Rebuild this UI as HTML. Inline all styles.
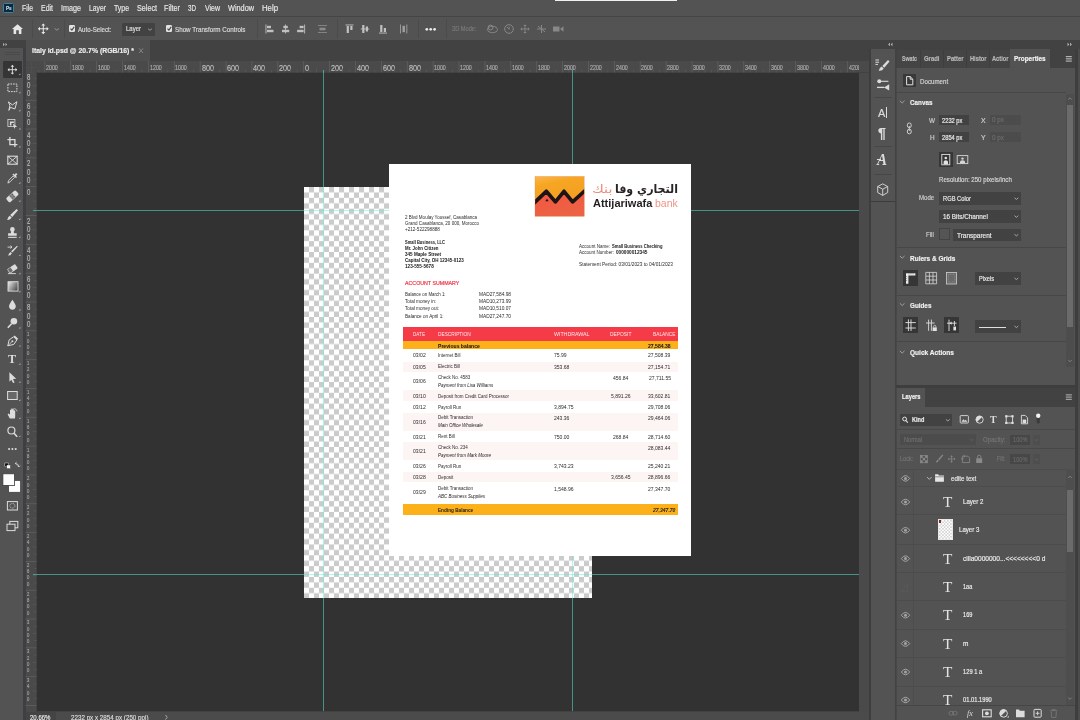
<!DOCTYPE html><html><head><meta charset="utf-8"><title>Photoshop</title><style>
*{box-sizing:border-box;margin:0;padding:0}
html,body{width:1080px;height:720px;overflow:hidden;background:#424242;font-family:"Liberation Sans","DejaVu Sans",sans-serif;color:#ddd;font-size:8px}
.a{position:absolute}
.t{position:absolute;white-space:nowrap;transform-origin:0 50%;line-height:1;-webkit-text-stroke:.7px}
.n{-webkit-text-stroke:0}
.b{font-weight:bold}
.i{font-style:italic}
svg{position:absolute;overflow:visible}
</style></head><body><div id="app" style="position:absolute;left:0;top:0;width:1080px;height:720px;overflow:hidden;will-change:transform">
<div class="a" style="left:0px;top:0px;width:1080px;height:16px;background:#535353;"></div>
<div class="a" style="left:0px;top:15.6px;width:1080px;height:1px;background:#454545;"></div>
<div class="a" style="left:0px;top:17px;width:1080px;height:23px;background:#535353;"></div>
<div class="a" style="left:0px;top:40px;width:1080px;height:20px;background:#424242;"></div>
<div class="a" style="left:0px;top:48px;width:23.4px;height:672px;background:#535353;"></div>
<div class="a" style="left:23.4px;top:48px;width:2.8px;height:672px;background:#3f3f41;"></div>
<div class="a" style="left:26.2px;top:40.3px;width:123.8px;height:20.5px;background:#4f4f4f;"></div>
<div class="a" style="left:25.5px;top:60.8px;width:843.4px;height:11.7px;background:#4a4a4a;"></div>
<div class="a" style="left:26.2px;top:72px;width:10.3px;height:640px;background:#4a4a4a;"></div>
<div class="a" style="left:36.5px;top:72.5px;width:822.2px;height:638.5px;background:#323232;"></div>
<div class="a" style="left:858.7px;top:72.5px;width:10.2px;height:639px;background:#4a4a4a;"></div>
<div class="a" style="left:25.5px;top:711.5px;width:843.4px;height:8.5px;background:#4b4b4b;"></div>
<div class="a" style="left:868.9px;top:40px;width:211.1px;height:680px;background:#424242;"></div>
<div class="a" style="left:868.9px;top:49px;width:2.4px;height:671px;background:#3e3e3e;"></div>
<div class="a" style="left:871.3px;top:49px;width:23.7px;height:671px;background:#535353;"></div>
<div class="a" style="left:1075px;top:48.5px;width:2.5px;height:671.5px;background:#3e3e3e;"></div>
<div class="a" style="left:1077.5px;top:48.5px;width:2.5px;height:671.5px;background:#4c4c4c;"></div>
<div class="a" style="left:3px;top:2.8px;width:10.7px;height:10.1px;background:#0a2a40;border:1px solid #3c8496;border-radius:1.5px"></div>
<div class="t b" style="left:5.5px;top:-4.2px;font-size:24px;color:#ccd8f4;transform:scale(0.1942,0.25);">Ps</div>
<div class="a" style="left:554.8px;top:0px;width:122.2px;height:1.1px;background:#f0f0f0;"></div>
<div class="t" style="left:22px;top:-8.6px;font-size:34.4px;color:#e6e6e6;transform:scale(0.1985,0.25);">File</div>
<div class="t" style="left:41px;top:-8.6px;font-size:34.4px;color:#e6e6e6;transform:scale(0.2024,0.25);">Edit</div>
<div class="t" style="left:61px;top:-8.6px;font-size:34.4px;color:#e6e6e6;transform:scale(0.2092,0.25);">Image</div>
<div class="t" style="left:89px;top:-8.6px;font-size:34.4px;color:#e6e6e6;transform:scale(0.1976,0.25);">Layer</div>
<div class="t" style="left:114px;top:-8.6px;font-size:34.4px;color:#e6e6e6;transform:scale(0.2011,0.25);">Type</div>
<div class="t" style="left:137px;top:-8.6px;font-size:34.4px;color:#e6e6e6;transform:scale(0.2092,0.25);">Select</div>
<div class="t" style="left:164px;top:-8.6px;font-size:34.4px;color:#e6e6e6;transform:scale(0.2093,0.25);">Filter</div>
<div class="t" style="left:188px;top:-8.6px;font-size:34.4px;color:#e6e6e6;transform:scale(0.1819,0.25);">3D</div>
<div class="t" style="left:205px;top:-8.6px;font-size:34.4px;color:#e6e6e6;transform:scale(0.2029,0.25);">View</div>
<div class="t" style="left:228px;top:-8.6px;font-size:34.4px;color:#e6e6e6;transform:scale(0.2125,0.25);">Window</div>
<div class="t" style="left:262px;top:-8.6px;font-size:34.4px;color:#e6e6e6;transform:scale(0.2262,0.25);">Help</div>
<svg style="left:11.5px;top:23.5px;" width="11" height="10" viewBox="0 0 11 10"><path d="M5.5 0.3 L11 5 L9.4 5 L9.4 10 L6.8 10 L6.8 6.3 L4.2 6.3 L4.2 10 L1.6 10 L1.6 5 L0 5 Z" fill="#e6e6e6"/></svg>
<div class="a" style="left:31.5px;top:19px;width:1px;height:19px;background:#4b4b4b;"></div>
<svg style="left:0px;top:0px;" width="1080" height="40" viewBox="0 0 1080 40"><path d="M38.55 28.8 H48.05 M43.3 24.05 V33.55" stroke="#e6e6e6" stroke-width="1.045" fill="none"/><path d="M37.949999999999996 28.8 l2.0425 -2.0425 v4.085z M48.65 28.8 l-2.0425 -2.0425 v4.085z M43.3 23.45 l-2.0425 2.0425 h4.085z M43.3 34.15 l-2.0425 -2.0425 h4.085z" fill="#e6e6e6"/></svg>
<svg style="left:0px;top:0px;" width="1080" height="40" viewBox="0 0 1080 40"><path d="M54.599999999999994 28.5 L56.8 30.1 L59.0 28.5" stroke="#9a9a9a" stroke-width="0.9" fill="none"/></svg>
<div class="a" style="left:64px;top:19px;width:1px;height:19px;background:#4b4b4b;"></div>
<div class="a" style="left:68.6px;top:25.3px;width:6.6px;height:7px;background:#e2e2e2;border-radius:1.2px"></div>
<svg style="left:68.6px;top:25.3px;" width="6.6" height="7" viewBox="0 0 6.6 7"><path d="M1.5 3.6 L2.9 5.1 L5.2 1.9" stroke="#444" stroke-width="1.1" fill="none"/></svg>
<div class="t" style="left:78px;top:13.8px;font-size:30.4px;color:#dcdcdc;transform:scale(0.2023,0.25);">Auto-Select:</div>
<div class="a" style="left:121.5px;top:22.5px;width:33px;height:13px;background:#424242;border-radius:1px"></div>
<div class="t" style="left:126px;top:14.4px;font-size:29.6px;color:#e0e0e0;transform:scale(0.2026,0.25);">Layer</div>
<svg style="left:0px;top:0px;" width="1080" height="40" viewBox="0 0 1080 40"><path d="M148.1 28.75 L150 30.25 L151.9 28.75" stroke="#a8a8a8" stroke-width="0.9" fill="none"/></svg>
<div class="a" style="left:165.6px;top:25.3px;width:6.6px;height:7px;background:#e2e2e2;border-radius:1.2px"></div>
<svg style="left:165.6px;top:25.3px;" width="6.6" height="7" viewBox="0 0 6.6 7"><path d="M1.5 3.6 L2.9 5.1 L5.2 1.9" stroke="#444" stroke-width="1.1" fill="none"/></svg>
<div class="t" style="left:175px;top:13.8px;font-size:30.4px;color:#dcdcdc;transform:scale(0.2056,0.25);">Show Transform Controls</div>
<div class="a" style="left:256.5px;top:19px;width:1px;height:19px;background:#4b4b4b;"></div>
<svg style="left:0px;top:0px;" width="1080" height="40" viewBox="0 0 1080 40"><rect x="265.5" y="24.5" width="0.9" height="9" fill="#c0c0c0"/><rect x="267" y="25.8" width="4" height="2.4" fill="#c0c0c0"/><rect x="267" y="29.8" width="6.5" height="2.4" fill="#c0c0c0"/><rect x="285.15000000000003" y="24.5" width="0.9" height="9" fill="#c0c0c0"/><rect x="283.40000000000003" y="25.8" width="4.4" height="2.4" fill="#c0c0c0"/><rect x="282.0" y="29.8" width="7.2" height="2.4" fill="#c0c0c0"/><rect x="304.20000000000005" y="24.5" width="0.9" height="9" fill="#c0c0c0"/><rect x="299.6" y="25.8" width="4" height="2.4" fill="#c0c0c0"/><rect x="297.1" y="29.8" width="6.5" height="2.4" fill="#c0c0c0"/><rect x="318.0" y="25" width="9" height="0.9" fill="#8a8a8a"/><rect x="318.0" y="32.1" width="9" height="0.9" fill="#8a8a8a"/><rect x="319.5" y="27.7" width="6" height="2.6" fill="#8a8a8a"/><rect x="345.5" y="24.5" width="8" height="0.9" fill="#c0c0c0"/><rect x="346.7" y="26" width="2.2" height="7" fill="#c0c0c0"/><rect x="350.3" y="26" width="2.2" height="4" fill="#c0c0c0"/><rect x="360.8" y="28.55" width="8.4" height="0.9" fill="#c0c0c0"/><rect x="362.2" y="25" width="2.2" height="8" fill="#c0c0c0"/><rect x="365.8" y="26.5" width="2.2" height="5" fill="#c0c0c0"/><rect x="379" y="32.6" width="8" height="0.9" fill="#c0c0c0"/><rect x="380.2" y="25" width="2.2" height="7" fill="#c0c0c0"/><rect x="383.8" y="28" width="2.2" height="4" fill="#c0c0c0"/><rect x="400.09999999999997" y="24.5" width="0.9" height="9" fill="#a0a0a0"/><rect x="406.4" y="24.5" width="0.9" height="9" fill="#a0a0a0"/><rect x="402.5" y="25.8" width="2.4" height="6.4" fill="#a0a0a0"/><circle cx="426.8" cy="29.3" r="1.35" fill="#ececec"/><circle cx="430.7" cy="29.3" r="1.35" fill="#ececec"/><circle cx="434.6" cy="29.3" r="1.35" fill="#ececec"/></svg>
<div class="a" style="left:336.5px;top:19px;width:1px;height:19px;background:#4b4b4b;"></div>
<div class="a" style="left:417.5px;top:19px;width:1px;height:19px;background:#4b4b4b;"></div>
<div class="a" style="left:445.5px;top:19px;width:1px;height:19px;background:#4b4b4b;"></div>
<div class="t" style="left:451.5px;top:15px;font-size:28px;color:#7a7a7a;transform:scale(0.2018,0.25);">3D Mode:</div>
<svg style="left:0px;top:0px;" width="1080" height="40" viewBox="0 0 1080 40"><ellipse cx="492.5" cy="29.5" rx="5" ry="3.2" fill="none" stroke="#888" stroke-width="1"/><circle cx="490.5" cy="27.5" r="2.4" fill="none" stroke="#888" stroke-width="1"/><circle cx="509" cy="29" r="4.3" fill="none" stroke="#888" stroke-width="1"/><path d="M507 27 l2.2 2.4 v-2.6" stroke="#888" stroke-width="0.9" fill="none"/><path d="M521.0 29 H529.0 M525 25.0 V33.0" stroke="#888" stroke-width="0.8800000000000001" fill="none"/><path d="M520.4 29 l1.72 -1.72 v3.44z M529.6 29 l-1.72 -1.72 v3.44z M525 24.4 l-1.72 1.72 h3.44z M525 33.6 l-1.72 -1.72 h3.44z" fill="#888"/><path d="M537 29 h9 M541.5 25 v8 M538 26 l7 6" stroke="#888" stroke-width="1" fill="none"/><rect x="553" y="26.5" width="6.5" height="5" fill="#888"/><path d="M560 29 l3.5 -2.8 v5.6z" fill="#888"/></svg>
<div class="t b" style="left:32px;top:35.1px;font-size:30.4px;color:#ececec;transform:scale(0.2265,0.25);">Italy id.psd @ 20.7% (RGB/16) *</div>
<svg style="left:0px;top:0px;" width="1080" height="70" viewBox="0 0 1080 70"><path d="M139.2 48.4 l3.8 4.6 M143 48.4 l-3.8 4.6" stroke="#8a8a8a" stroke-width="0.9"/></svg>
<svg style="left:0px;top:0px;" width="60" height="60" viewBox="0 0 60 60"><path d="M3.2 42.8 l1.4 1.7 l-1.4 1.7z M5.6 42.8 l1.4 1.7 l-1.4 1.7z" fill="#c8c8c8"/></svg>
<div class="a" style="left:5px;top:52px;width:15px;height:1px;background:#4a4a4a;"></div>
<div class="a" style="left:5px;top:54px;width:15px;height:1px;background:#4a4a4a;"></div>
<div class="a" style="left:25.5px;top:711.5px;width:29.5px;height:8.5px;background:#444;"></div>
<div class="t" style="left:29.5px;top:702.8px;font-size:29.6px;color:#e8e8e8;transform:scale(0.2042,0.25);">20.66%</div>
<div class="t" style="left:70.5px;top:702.8px;font-size:29.6px;color:#dcdcdc;transform:scale(0.2112,0.25);">2232 px x 2854 px (250 ppi)</div>
<svg style="left:0px;top:0px;" width="1080" height="720" viewBox="0 0 1080 720"><path d="M165.5 715 l1.7 2.3 l-1.7 2.3" stroke="#bbb" stroke-width="0.8" fill="none"/></svg>
<div class="a" style="left:55px;top:711.5px;width:1px;height:8.5px;background:#444;"></div>
<div class="a" style="left:3.4px;top:61.4px;width:18.5px;height:16.2px;background:#353535;border-radius:1px"></div>
<svg style="left:0px;top:0px;" width="30" height="720" viewBox="0 0 30 720"><path d="M8.15 69.7 H16.65 M12.4 65.45 V73.95" stroke="#dcdcdc" stroke-width="0.935" fill="none"/><path d="M7.550000000000001 69.7 l1.8275 -1.8275 v3.655z M17.25 69.7 l-1.8275 -1.8275 v3.655z M12.4 64.85000000000001 l-1.8275 1.8275 h3.655z M12.4 74.55 l-1.8275 -1.8275 h3.655z" fill="#dcdcdc"/><rect x="7.9" y="84.00000000000001" width="9" height="7.6" fill="none" stroke="#dcdcdc" stroke-width="1" stroke-dasharray="1.6 1"/><path d="M8.4 101.9 L12.4 104.9 L16.9 101.7 L14.9 108.9 L10.4 107.4 L8.9 110.4 L9.9 105.4 Z" fill="none" stroke="#dcdcdc" stroke-width="1"/><rect x="7.9" y="119.5" width="7" height="7" fill="none" stroke="#dcdcdc" stroke-width="0.8"/><path d="M9.9 121.5 h4 v1.5 h-2.5 v2.5 h-1.5z" fill="#dcdcdc"/><path d="M12.9 123.8 l4.3 3 l-2 0.3 l-0.8 1.9z" fill="#dcdcdc"/><path d="M9.9 137.10000000000002 V144.60000000000002 H17.4 M7.4 139.60000000000002 H14.9 V147.10000000000002" fill="none" stroke="#dcdcdc" stroke-width="1.3"/><rect x="7.800000000000001" y="156.2" width="9.4" height="8" fill="none" stroke="#dcdcdc" stroke-width="1.1"/><path d="M7.800000000000001 156.2 L17.2 164.2 M17.2 156.2 L7.800000000000001 164.2" stroke="#dcdcdc" stroke-width="0.9"/><path d="M7.9 183.10000000000002 L8.600000000000001 180.5 L13.200000000000001 175.9 L14.600000000000001 177.3 L10.0 181.9 Z" fill="none" stroke="#dcdcdc" stroke-width="0.9"/><path d="M12.4 174.5 L16.0 178.10000000000002 L17.0 177.10000000000002 L15.8 175.9 L17.4 174.3 L16.0 173.10000000000002 L14.600000000000001 174.70000000000002 L13.4 173.5Z" fill="#dcdcdc"/><g transform="rotate(-42 12.4 196.40000000000003)"><rect x="6.0" y="193.50000000000003" width="12.8" height="5.8" rx="1.6" fill="#dcdcdc"/><rect x="10.3" y="193.50000000000003" width="4.2" height="5.8" fill="#8a8a8a"/><circle cx="11.4" cy="195.20000000000005" r="0.5" fill="#444"/><circle cx="13.4" cy="195.20000000000005" r="0.5" fill="#444"/><circle cx="11.4" cy="197.60000000000002" r="0.5" fill="#444"/><circle cx="13.4" cy="197.60000000000002" r="0.5" fill="#444"/></g><path d="M16.6 208.9 L18.0 210.3 L12.200000000000001 216.9 L10.2 215.1Z" fill="#dcdcdc"/><path d="M9.7 215.7 L11.700000000000001 217.5 Q10.4 220.3 7.2 219.9 Q8.0 216.5 9.7 215.7Z" fill="#dcdcdc"/><circle cx="12.4" cy="229.40000000000003" r="2.3" fill="#dcdcdc"/><path d="M11.3 230.60000000000002 h2.2 l0.5 2.6 h2.7 v2.6 h-8.6 v-2.6 h2.7z" fill="#dcdcdc"/><rect x="8.100000000000001" y="236.8" width="8.6" height="1.1" fill="#dcdcdc"/><path d="M17.0 245.7 L17.7 246.39999999999998 L12.4 252.5 L11.1 251.29999999999998Z" fill="#dcdcdc"/><path d="M10.6 252.0 L11.9 253.29999999999998 Q10.9 255.7 8.100000000000001 255.5 Q9.100000000000001 252.5 10.6 252.0Z" fill="#dcdcdc"/><path d="M7.6000000000000005 247.1 h4 M10.4 245.7 l1.6 1.4 l-1.6 1.4" stroke="#dcdcdc" stroke-width="0.9" fill="none"/><g transform="rotate(-35 12.4 268.8)"><rect x="7.6000000000000005" y="266.2" width="9.6" height="5.2" rx="0.8" fill="#dcdcdc"/><rect x="8.2" y="266.8" width="3.4" height="4" fill="#6a6a6a"/></g><rect x="7.9" y="273.2" width="8" height="0.9" fill="#dcdcdc"/><defs><linearGradient id="gt" x1="0" y1="0" x2="1" y2="0.6"><stop offset="0" stop-color="#eee"/><stop offset="1" stop-color="#555"/></linearGradient></defs><rect x="8.0" y="281.70000000000005" width="10" height="9.4" fill="url(#gt)" stroke="#dcdcdc" stroke-width="0.9"/><path d="M12.4 299.8 Q16.6 305.5 15.600000000000001 307.6 A3.4 3.4 0 0 1 9.2 307.6 Q8.2 305.5 12.4 299.8Z" fill="#dcdcdc"/><circle cx="13.9" cy="321.3" r="3.3" fill="#dcdcdc"/><path d="M11.6 323.70000000000005 L7.800000000000001 327.70000000000005" stroke="#dcdcdc" stroke-width="1.6"/><path d="M7.800000000000001 345.8 L9.2 339.8 L13.6 336.8 L16.8 340.0 L13.8 344.4 Z" fill="none" stroke="#dcdcdc" stroke-width="1"/><circle cx="12.4" cy="341.2" r="1" fill="#dcdcdc"/><path d="M7.800000000000001 345.8 L11.8 341.8" stroke="#dcdcdc" stroke-width="0.8"/><path d="M14.200000000000001 336.0 L17.6 339.4" stroke="#dcdcdc" stroke-width="1.5"/><path d="M9.4 372.20000000000005 L16.2 378.8 L13.0 379.00000000000006 L14.600000000000001 382.40000000000003 L13.0 383.00000000000006 L11.4 379.8 L9.4 381.8Z" fill="#dcdcdc"/><rect x="7.6000000000000005" y="391.5" width="9.6" height="8" fill="#686868" stroke="#dcdcdc" stroke-width="1"/><path d="M9.8 418.6 L7.6000000000000005 414.20000000000005 L8.8 413.40000000000003 L10.0 414.8 V409.8 h1.3 V413.0 V408.6 h1.3 V413.0 V409.20000000000005 h1.3 V413.20000000000005 V410.6 h1.3 V416.0 L15.0 418.6Z" fill="#dcdcdc"/><path d="M13.4 408.40000000000003 a4 4 0 0 1 3.8 3" stroke="#dcdcdc" stroke-width="0.7" fill="none"/><circle cx="11.4" cy="430.5" r="3.5" fill="none" stroke="#dcdcdc" stroke-width="1.2"/><path d="M14.0 433.3 L17.2 436.7" stroke="#dcdcdc" stroke-width="1.6"/><circle cx="9.100000000000001" cy="449.0" r="1.05" fill="#dcdcdc"/><circle cx="12.4" cy="449.0" r="1.05" fill="#dcdcdc"/><circle cx="15.7" cy="449.0" r="1.05" fill="#dcdcdc"/><path d="M18.7 75.10000000000001 l1.7 0 l0 -1.7z" fill="#b8b8b8"/><path d="M18.7 93.20000000000002 l1.7 0 l0 -1.7z" fill="#b8b8b8"/><path d="M18.7 111.30000000000001 l1.7 0 l0 -1.7z" fill="#b8b8b8"/><path d="M18.7 129.4 l1.7 0 l0 -1.7z" fill="#b8b8b8"/><path d="M18.7 147.50000000000003 l1.7 0 l0 -1.7z" fill="#b8b8b8"/><path d="M18.7 183.70000000000002 l1.7 0 l0 -1.7z" fill="#b8b8b8"/><path d="M18.7 201.80000000000004 l1.7 0 l0 -1.7z" fill="#b8b8b8"/><path d="M18.7 219.9 l1.7 0 l0 -1.7z" fill="#b8b8b8"/><path d="M18.7 238.00000000000003 l1.7 0 l0 -1.7z" fill="#b8b8b8"/><path d="M18.7 256.09999999999997 l1.7 0 l0 -1.7z" fill="#b8b8b8"/><path d="M18.7 274.2 l1.7 0 l0 -1.7z" fill="#b8b8b8"/><path d="M18.7 292.3 l1.7 0 l0 -1.7z" fill="#b8b8b8"/><path d="M18.7 310.4 l1.7 0 l0 -1.7z" fill="#b8b8b8"/><path d="M18.7 328.5 l1.7 0 l0 -1.7z" fill="#b8b8b8"/><path d="M18.7 346.59999999999997 l1.7 0 l0 -1.7z" fill="#b8b8b8"/><path d="M18.7 364.7 l1.7 0 l0 -1.7z" fill="#b8b8b8"/><path d="M18.7 382.8 l1.7 0 l0 -1.7z" fill="#b8b8b8"/><path d="M18.7 400.9 l1.7 0 l0 -1.7z" fill="#b8b8b8"/><path d="M18.7 419.0 l1.7 0 l0 -1.7z" fill="#b8b8b8"/><path d="M18.7 437.09999999999997 l1.7 0 l0 -1.7z" fill="#b8b8b8"/><rect x="4.8" y="463" width="3.6" height="3.6" fill="#111" stroke="#ddd" stroke-width="0.5"/><rect x="6.8" y="465" width="3.6" height="3.6" fill="#fff" stroke="#333" stroke-width="0.4"/><path d="M15.2 463.4 q3.6 0 3.6 3.6 M15.2 463.4 l1.4 -1.3 M15.2 463.4 l1.4 1.3 M18.8 467 l-1.3 -1.4 M18.8 467 l1.3 -1.4" stroke="#dcdcdc" stroke-width="0.8" fill="none"/><rect x="8.7" y="480.6" width="11.7" height="11.6" fill="#fff" stroke="#333" stroke-width="0.6"/><rect x="2.9" y="473.8" width="11.7" height="11.6" fill="#fff" stroke="#3a3a3a" stroke-width="0.8"/><rect x="7.4" y="501.6" width="10" height="8.4" fill="none" stroke="#dcdcdc" stroke-width="1"/><ellipse cx="12.4" cy="505.8" rx="2.6" ry="2.3" fill="none" stroke="#dcdcdc" stroke-width="0.8" stroke-dasharray="1 0.7"/><rect x="9.8" y="521.4" width="8" height="6.4" fill="none" stroke="#dcdcdc" stroke-width="1"/><rect x="7.0" y="524.2" width="8" height="6.4" fill="#535353" stroke="#dcdcdc" stroke-width="1"/></svg>
<div class="t b n" style="left:7.9px;top:352.4px;font-size:13.5px;color:#dcdcdc;font-family:'Liberation Serif',serif;transform:scaleX(.9)">T</div>
<svg style="left:0px;top:0px;" width="1080" height="80" viewBox="0 0 1080 80"><rect x="44.43" y="61" width="0.8" height="11.5" fill="#606060"/><rect x="70.32" y="61" width="0.8" height="11.5" fill="#606060"/><rect x="96.2" y="61" width="0.8" height="11.5" fill="#606060"/><rect x="122.09" y="61" width="0.8" height="11.5" fill="#606060"/><rect x="147.98" y="61" width="0.8" height="11.5" fill="#606060"/><rect x="173.86" y="61" width="0.8" height="11.5" fill="#606060"/><rect x="199.75" y="61" width="0.8" height="11.5" fill="#606060"/><rect x="225.64" y="61" width="0.8" height="11.5" fill="#606060"/><rect x="251.53" y="61" width="0.8" height="11.5" fill="#606060"/><rect x="277.41" y="61" width="0.8" height="11.5" fill="#606060"/><rect x="303.3" y="61" width="0.8" height="11.5" fill="#606060"/><rect x="329.19" y="61" width="0.8" height="11.5" fill="#606060"/><rect x="355.07" y="61" width="0.8" height="11.5" fill="#606060"/><rect x="380.96" y="61" width="0.8" height="11.5" fill="#606060"/><rect x="406.85" y="61" width="0.8" height="11.5" fill="#606060"/><rect x="432.74" y="61" width="0.8" height="11.5" fill="#606060"/><rect x="458.62" y="61" width="0.8" height="11.5" fill="#606060"/><rect x="484.51" y="61" width="0.8" height="11.5" fill="#606060"/><rect x="510.4" y="61" width="0.8" height="11.5" fill="#606060"/><rect x="536.28" y="61" width="0.8" height="11.5" fill="#606060"/><rect x="562.17" y="61" width="0.8" height="11.5" fill="#606060"/><rect x="588.06" y="61" width="0.8" height="11.5" fill="#606060"/><rect x="613.95" y="61" width="0.8" height="11.5" fill="#606060"/><rect x="639.83" y="61" width="0.8" height="11.5" fill="#606060"/><rect x="665.72" y="61" width="0.8" height="11.5" fill="#606060"/><rect x="691.61" y="61" width="0.8" height="11.5" fill="#606060"/><rect x="717.49" y="61" width="0.8" height="11.5" fill="#606060"/><rect x="743.38" y="61" width="0.8" height="11.5" fill="#606060"/><rect x="769.27" y="61" width="0.8" height="11.5" fill="#606060"/><rect x="795.15" y="61" width="0.8" height="11.5" fill="#606060"/><rect x="821.04" y="61" width="0.8" height="11.5" fill="#606060"/><rect x="846.93" y="61" width="0.8" height="11.5" fill="#606060"/></svg>
<div class="t" style="left:46.03px;top:54.4px;font-size:27.6px;color:#acacac;transform:scale(0.1922,0.25);">2000</div>
<div class="t" style="left:71.92px;top:54.4px;font-size:27.6px;color:#acacac;transform:scale(0.1922,0.25);">1800</div>
<div class="t" style="left:97.8px;top:54.4px;font-size:27.6px;color:#acacac;transform:scale(0.1922,0.25);">1600</div>
<div class="t" style="left:123.69px;top:54.4px;font-size:27.6px;color:#acacac;transform:scale(0.1922,0.25);">1400</div>
<div class="t" style="left:149.58px;top:54.4px;font-size:27.6px;color:#acacac;transform:scale(0.1922,0.25);">1200</div>
<div class="t" style="left:175.46px;top:54.4px;font-size:27.6px;color:#acacac;transform:scale(0.1922,0.25);">1000</div>
<div class="t" style="left:201.55px;top:49px;font-size:37.6px;color:#bcbcbc;transform:scale(0.1929,0.25);">800</div>
<div class="t" style="left:227.44px;top:49px;font-size:37.6px;color:#bcbcbc;transform:scale(0.1929,0.25);">600</div>
<div class="t" style="left:253.33px;top:49px;font-size:37.6px;color:#bcbcbc;transform:scale(0.1929,0.25);">400</div>
<div class="t" style="left:279.21px;top:49px;font-size:37.6px;color:#bcbcbc;transform:scale(0.1929,0.25);">200</div>
<div class="t" style="left:305.1px;top:49px;font-size:37.6px;color:#bcbcbc;transform:scale(0.1961,0.25);">0</div>
<div class="t" style="left:330.99px;top:49px;font-size:37.6px;color:#bcbcbc;transform:scale(0.1929,0.25);">200</div>
<div class="t" style="left:356.87px;top:49px;font-size:37.6px;color:#bcbcbc;transform:scale(0.1929,0.25);">400</div>
<div class="t" style="left:382.76px;top:49px;font-size:37.6px;color:#bcbcbc;transform:scale(0.1929,0.25);">600</div>
<div class="t" style="left:408.65px;top:49px;font-size:37.6px;color:#bcbcbc;transform:scale(0.1929,0.25);">800</div>
<div class="t" style="left:434.34px;top:54.4px;font-size:27.6px;color:#acacac;transform:scale(0.1922,0.25);">1000</div>
<div class="t" style="left:460.22px;top:54.4px;font-size:27.6px;color:#acacac;transform:scale(0.1922,0.25);">1200</div>
<div class="t" style="left:486.11px;top:54.4px;font-size:27.6px;color:#acacac;transform:scale(0.1922,0.25);">1400</div>
<div class="t" style="left:512px;top:54.4px;font-size:27.6px;color:#acacac;transform:scale(0.1922,0.25);">1600</div>
<div class="t" style="left:537.88px;top:54.4px;font-size:27.6px;color:#acacac;transform:scale(0.1922,0.25);">1800</div>
<div class="t" style="left:563.77px;top:54.4px;font-size:27.6px;color:#acacac;transform:scale(0.1922,0.25);">2000</div>
<div class="t" style="left:589.66px;top:54.4px;font-size:27.6px;color:#acacac;transform:scale(0.1922,0.25);">2200</div>
<div class="t" style="left:615.55px;top:54.4px;font-size:27.6px;color:#acacac;transform:scale(0.1922,0.25);">2400</div>
<div class="t" style="left:641.43px;top:54.4px;font-size:27.6px;color:#acacac;transform:scale(0.1922,0.25);">2600</div>
<div class="t" style="left:667.32px;top:54.4px;font-size:27.6px;color:#acacac;transform:scale(0.1922,0.25);">2800</div>
<div class="t" style="left:693.21px;top:54.4px;font-size:27.6px;color:#acacac;transform:scale(0.1922,0.25);">3000</div>
<div class="t" style="left:719.09px;top:54.4px;font-size:27.6px;color:#acacac;transform:scale(0.1922,0.25);">3200</div>
<div class="t" style="left:744.98px;top:54.4px;font-size:27.6px;color:#acacac;transform:scale(0.1922,0.25);">3400</div>
<div class="t" style="left:770.87px;top:54.4px;font-size:27.6px;color:#acacac;transform:scale(0.1922,0.25);">3600</div>
<div class="t" style="left:796.75px;top:54.4px;font-size:27.6px;color:#acacac;transform:scale(0.1922,0.25);">3800</div>
<div class="t" style="left:822.64px;top:54.4px;font-size:27.6px;color:#acacac;transform:scale(0.1922,0.25);">4000</div>
<div class="t" style="left:848.53px;top:54.4px;font-size:27.6px;color:#acacac;transform:scale(0.1922,0.25);">4200</div>
<svg style="left:0px;top:0px;" width="40" height="720" viewBox="0 0 40 720"><rect x="25.5" y="99.83" width="11" height="0.8" fill="#5f5f5f"/><rect x="25.5" y="128.65" width="11" height="0.8" fill="#5f5f5f"/><rect x="25.5" y="157.48" width="11" height="0.8" fill="#5f5f5f"/><rect x="25.5" y="186.3" width="11" height="0.8" fill="#5f5f5f"/><rect x="25.5" y="215.12" width="11" height="0.8" fill="#5f5f5f"/><rect x="25.5" y="243.95" width="11" height="0.8" fill="#5f5f5f"/><rect x="25.5" y="272.77" width="11" height="0.8" fill="#5f5f5f"/><rect x="25.5" y="301.59" width="11" height="0.8" fill="#5f5f5f"/><rect x="25.5" y="330.41" width="11" height="0.8" fill="#5f5f5f"/><rect x="25.5" y="359.24" width="11" height="0.8" fill="#5f5f5f"/><rect x="25.5" y="388.06" width="11" height="0.8" fill="#5f5f5f"/><rect x="25.5" y="416.88" width="11" height="0.8" fill="#5f5f5f"/><rect x="25.5" y="445.7" width="11" height="0.8" fill="#5f5f5f"/><rect x="25.5" y="474.53" width="11" height="0.8" fill="#5f5f5f"/><rect x="25.5" y="503.35" width="11" height="0.8" fill="#5f5f5f"/><rect x="25.5" y="532.17" width="11" height="0.8" fill="#5f5f5f"/><rect x="25.5" y="561" width="11" height="0.8" fill="#5f5f5f"/><rect x="25.5" y="589.82" width="11" height="0.8" fill="#5f5f5f"/><rect x="25.5" y="618.64" width="11" height="0.8" fill="#5f5f5f"/><rect x="25.5" y="647.46" width="11" height="0.8" fill="#5f5f5f"/><rect x="25.5" y="676.29" width="11" height="0.8" fill="#5f5f5f"/><rect x="25.5" y="705.11" width="11" height="0.8" fill="#5f5f5f"/></svg>
<div class="t" style="left:26.83px;top:59.91px;font-size:34.4px;color:#b8b8b8;transform:scale(0.1750,0.25);">8</div>
<div class="t" style="left:26.83px;top:68.11px;font-size:34.4px;color:#b8b8b8;transform:scale(0.1750,0.25);">0</div>
<div class="t" style="left:26.83px;top:76.31px;font-size:34.4px;color:#b8b8b8;transform:scale(0.1750,0.25);">0</div>
<div class="t" style="left:26.83px;top:88.73px;font-size:34.4px;color:#b8b8b8;transform:scale(0.1750,0.25);">6</div>
<div class="t" style="left:26.83px;top:96.93px;font-size:34.4px;color:#b8b8b8;transform:scale(0.1750,0.25);">0</div>
<div class="t" style="left:26.83px;top:105.13px;font-size:34.4px;color:#b8b8b8;transform:scale(0.1750,0.25);">0</div>
<div class="t" style="left:26.83px;top:117.55px;font-size:34.4px;color:#b8b8b8;transform:scale(0.1750,0.25);">4</div>
<div class="t" style="left:26.83px;top:125.75px;font-size:34.4px;color:#b8b8b8;transform:scale(0.1750,0.25);">0</div>
<div class="t" style="left:26.83px;top:133.95px;font-size:34.4px;color:#b8b8b8;transform:scale(0.1750,0.25);">0</div>
<div class="t" style="left:26.83px;top:146.38px;font-size:34.4px;color:#b8b8b8;transform:scale(0.1750,0.25);">2</div>
<div class="t" style="left:26.83px;top:154.58px;font-size:34.4px;color:#b8b8b8;transform:scale(0.1750,0.25);">0</div>
<div class="t" style="left:26.83px;top:162.78px;font-size:34.4px;color:#b8b8b8;transform:scale(0.1750,0.25);">0</div>
<div class="t" style="left:26.83px;top:175.2px;font-size:34.4px;color:#b8b8b8;transform:scale(0.1750,0.25);">0</div>
<div class="t" style="left:26.83px;top:204.02px;font-size:34.4px;color:#b8b8b8;transform:scale(0.1750,0.25);">2</div>
<div class="t" style="left:26.83px;top:212.22px;font-size:34.4px;color:#b8b8b8;transform:scale(0.1750,0.25);">0</div>
<div class="t" style="left:26.83px;top:220.42px;font-size:34.4px;color:#b8b8b8;transform:scale(0.1750,0.25);">0</div>
<div class="t" style="left:26.83px;top:232.85px;font-size:34.4px;color:#b8b8b8;transform:scale(0.1750,0.25);">4</div>
<div class="t" style="left:26.83px;top:241.05px;font-size:34.4px;color:#b8b8b8;transform:scale(0.1750,0.25);">0</div>
<div class="t" style="left:26.83px;top:249.25px;font-size:34.4px;color:#b8b8b8;transform:scale(0.1750,0.25);">0</div>
<div class="t" style="left:26.83px;top:261.67px;font-size:34.4px;color:#b8b8b8;transform:scale(0.1750,0.25);">6</div>
<div class="t" style="left:26.83px;top:269.87px;font-size:34.4px;color:#b8b8b8;transform:scale(0.1750,0.25);">0</div>
<div class="t" style="left:26.83px;top:278.07px;font-size:34.4px;color:#b8b8b8;transform:scale(0.1750,0.25);">0</div>
<div class="t" style="left:26.83px;top:290.49px;font-size:34.4px;color:#b8b8b8;transform:scale(0.1750,0.25);">8</div>
<div class="t" style="left:26.83px;top:298.69px;font-size:34.4px;color:#b8b8b8;transform:scale(0.1750,0.25);">0</div>
<div class="t" style="left:26.83px;top:306.89px;font-size:34.4px;color:#b8b8b8;transform:scale(0.1750,0.25);">0</div>
<div class="t" style="left:27.34px;top:323.21px;font-size:23.2px;color:#a2a2a2;transform:scale(0.1800,0.25);">1</div>
<div class="t" style="left:27.34px;top:329.51px;font-size:23.2px;color:#a2a2a2;transform:scale(0.1800,0.25);">0</div>
<div class="t" style="left:27.34px;top:335.81px;font-size:23.2px;color:#a2a2a2;transform:scale(0.1800,0.25);">0</div>
<div class="t" style="left:27.34px;top:342.11px;font-size:23.2px;color:#a2a2a2;transform:scale(0.1800,0.25);">0</div>
<div class="t" style="left:27.34px;top:352.04px;font-size:23.2px;color:#a2a2a2;transform:scale(0.1800,0.25);">1</div>
<div class="t" style="left:27.34px;top:358.34px;font-size:23.2px;color:#a2a2a2;transform:scale(0.1800,0.25);">2</div>
<div class="t" style="left:27.34px;top:364.64px;font-size:23.2px;color:#a2a2a2;transform:scale(0.1800,0.25);">0</div>
<div class="t" style="left:27.34px;top:370.94px;font-size:23.2px;color:#a2a2a2;transform:scale(0.1800,0.25);">0</div>
<div class="t" style="left:27.34px;top:380.86px;font-size:23.2px;color:#a2a2a2;transform:scale(0.1800,0.25);">1</div>
<div class="t" style="left:27.34px;top:387.16px;font-size:23.2px;color:#a2a2a2;transform:scale(0.1800,0.25);">4</div>
<div class="t" style="left:27.34px;top:393.46px;font-size:23.2px;color:#a2a2a2;transform:scale(0.1800,0.25);">0</div>
<div class="t" style="left:27.34px;top:399.76px;font-size:23.2px;color:#a2a2a2;transform:scale(0.1800,0.25);">0</div>
<div class="t" style="left:27.34px;top:409.68px;font-size:23.2px;color:#a2a2a2;transform:scale(0.1800,0.25);">1</div>
<div class="t" style="left:27.34px;top:415.98px;font-size:23.2px;color:#a2a2a2;transform:scale(0.1800,0.25);">6</div>
<div class="t" style="left:27.34px;top:422.28px;font-size:23.2px;color:#a2a2a2;transform:scale(0.1800,0.25);">0</div>
<div class="t" style="left:27.34px;top:428.58px;font-size:23.2px;color:#a2a2a2;transform:scale(0.1800,0.25);">0</div>
<div class="t" style="left:27.34px;top:438.5px;font-size:23.2px;color:#a2a2a2;transform:scale(0.1800,0.25);">1</div>
<div class="t" style="left:27.34px;top:444.8px;font-size:23.2px;color:#a2a2a2;transform:scale(0.1800,0.25);">8</div>
<div class="t" style="left:27.34px;top:451.1px;font-size:23.2px;color:#a2a2a2;transform:scale(0.1800,0.25);">0</div>
<div class="t" style="left:27.34px;top:457.4px;font-size:23.2px;color:#a2a2a2;transform:scale(0.1800,0.25);">0</div>
<div class="t" style="left:27.34px;top:467.33px;font-size:23.2px;color:#a2a2a2;transform:scale(0.1800,0.25);">2</div>
<div class="t" style="left:27.34px;top:473.63px;font-size:23.2px;color:#a2a2a2;transform:scale(0.1800,0.25);">0</div>
<div class="t" style="left:27.34px;top:479.93px;font-size:23.2px;color:#a2a2a2;transform:scale(0.1800,0.25);">0</div>
<div class="t" style="left:27.34px;top:486.23px;font-size:23.2px;color:#a2a2a2;transform:scale(0.1800,0.25);">0</div>
<div class="t" style="left:27.34px;top:496.15px;font-size:23.2px;color:#a2a2a2;transform:scale(0.1800,0.25);">2</div>
<div class="t" style="left:27.34px;top:502.45px;font-size:23.2px;color:#a2a2a2;transform:scale(0.1800,0.25);">2</div>
<div class="t" style="left:27.34px;top:508.75px;font-size:23.2px;color:#a2a2a2;transform:scale(0.1800,0.25);">0</div>
<div class="t" style="left:27.34px;top:515.05px;font-size:23.2px;color:#a2a2a2;transform:scale(0.1800,0.25);">0</div>
<div class="t" style="left:27.34px;top:524.97px;font-size:23.2px;color:#a2a2a2;transform:scale(0.1800,0.25);">2</div>
<div class="t" style="left:27.34px;top:531.27px;font-size:23.2px;color:#a2a2a2;transform:scale(0.1800,0.25);">4</div>
<div class="t" style="left:27.34px;top:537.57px;font-size:23.2px;color:#a2a2a2;transform:scale(0.1800,0.25);">0</div>
<div class="t" style="left:27.34px;top:543.87px;font-size:23.2px;color:#a2a2a2;transform:scale(0.1800,0.25);">0</div>
<div class="t" style="left:27.34px;top:553.8px;font-size:23.2px;color:#a2a2a2;transform:scale(0.1800,0.25);">2</div>
<div class="t" style="left:27.34px;top:560.1px;font-size:23.2px;color:#a2a2a2;transform:scale(0.1800,0.25);">6</div>
<div class="t" style="left:27.34px;top:566.4px;font-size:23.2px;color:#a2a2a2;transform:scale(0.1800,0.25);">0</div>
<div class="t" style="left:27.34px;top:572.7px;font-size:23.2px;color:#a2a2a2;transform:scale(0.1800,0.25);">0</div>
<div class="t" style="left:27.34px;top:582.62px;font-size:23.2px;color:#a2a2a2;transform:scale(0.1800,0.25);">2</div>
<div class="t" style="left:27.34px;top:588.92px;font-size:23.2px;color:#a2a2a2;transform:scale(0.1800,0.25);">8</div>
<div class="t" style="left:27.34px;top:595.22px;font-size:23.2px;color:#a2a2a2;transform:scale(0.1800,0.25);">0</div>
<div class="t" style="left:27.34px;top:601.52px;font-size:23.2px;color:#a2a2a2;transform:scale(0.1800,0.25);">0</div>
<div class="t" style="left:27.34px;top:611.44px;font-size:23.2px;color:#a2a2a2;transform:scale(0.1800,0.25);">3</div>
<div class="t" style="left:27.34px;top:617.74px;font-size:23.2px;color:#a2a2a2;transform:scale(0.1800,0.25);">0</div>
<div class="t" style="left:27.34px;top:624.04px;font-size:23.2px;color:#a2a2a2;transform:scale(0.1800,0.25);">0</div>
<div class="t" style="left:27.34px;top:630.34px;font-size:23.2px;color:#a2a2a2;transform:scale(0.1800,0.25);">0</div>
<div class="t" style="left:27.34px;top:640.26px;font-size:23.2px;color:#a2a2a2;transform:scale(0.1800,0.25);">3</div>
<div class="t" style="left:27.34px;top:646.56px;font-size:23.2px;color:#a2a2a2;transform:scale(0.1800,0.25);">2</div>
<div class="t" style="left:27.34px;top:652.86px;font-size:23.2px;color:#a2a2a2;transform:scale(0.1800,0.25);">0</div>
<div class="t" style="left:27.34px;top:659.16px;font-size:23.2px;color:#a2a2a2;transform:scale(0.1800,0.25);">0</div>
<div class="t" style="left:27.34px;top:669.09px;font-size:23.2px;color:#a2a2a2;transform:scale(0.1800,0.25);">3</div>
<div class="t" style="left:27.34px;top:675.39px;font-size:23.2px;color:#a2a2a2;transform:scale(0.1800,0.25);">4</div>
<div class="t" style="left:27.34px;top:681.69px;font-size:23.2px;color:#a2a2a2;transform:scale(0.1800,0.25);">0</div>
<div class="t" style="left:27.34px;top:687.99px;font-size:23.2px;color:#a2a2a2;transform:scale(0.1800,0.25);">0</div>
<div class="a" style="left:858.7px;top:60.8px;width:10.2px;height:11.7px;background:#4a4a4a;"></div>
<svg style="left:0px;top:0px;" width="1080" height="720" viewBox="0 0 1080 720"><rect x="38.01" y="69.8" width="0.7" height="2.7" fill="#5a5a5a"/><rect x="50.95" y="69.8" width="0.7" height="2.7" fill="#5a5a5a"/><rect x="57.42" y="68.6" width="0.7" height="3.9" fill="#5a5a5a"/><rect x="63.89" y="69.8" width="0.7" height="2.7" fill="#5a5a5a"/><rect x="76.84" y="69.8" width="0.7" height="2.7" fill="#5a5a5a"/><rect x="83.31" y="68.6" width="0.7" height="3.9" fill="#5a5a5a"/><rect x="89.78" y="69.8" width="0.7" height="2.7" fill="#5a5a5a"/><rect x="102.72" y="69.8" width="0.7" height="2.7" fill="#5a5a5a"/><rect x="109.2" y="68.6" width="0.7" height="3.9" fill="#5a5a5a"/><rect x="115.67" y="69.8" width="0.7" height="2.7" fill="#5a5a5a"/><rect x="128.61" y="69.8" width="0.7" height="2.7" fill="#5a5a5a"/><rect x="135.08" y="68.6" width="0.7" height="3.9" fill="#5a5a5a"/><rect x="141.56" y="69.8" width="0.7" height="2.7" fill="#5a5a5a"/><rect x="154.5" y="69.8" width="0.7" height="2.7" fill="#5a5a5a"/><rect x="160.97" y="68.6" width="0.7" height="3.9" fill="#5a5a5a"/><rect x="167.44" y="69.8" width="0.7" height="2.7" fill="#5a5a5a"/><rect x="180.39" y="69.8" width="0.7" height="2.7" fill="#5a5a5a"/><rect x="186.86" y="68.6" width="0.7" height="3.9" fill="#5a5a5a"/><rect x="193.33" y="69.8" width="0.7" height="2.7" fill="#5a5a5a"/><rect x="206.27" y="69.8" width="0.7" height="2.7" fill="#5a5a5a"/><rect x="33.8" y="78.26" width="2.7" height="0.7" fill="#5a5a5a"/><rect x="212.75" y="68.6" width="0.7" height="3.9" fill="#5a5a5a"/><rect x="32.6" y="85.47" width="3.9" height="0.7" fill="#5a5a5a"/><rect x="219.22" y="69.8" width="0.7" height="2.7" fill="#5a5a5a"/><rect x="33.8" y="92.68" width="2.7" height="0.7" fill="#5a5a5a"/><rect x="232.16" y="69.8" width="0.7" height="2.7" fill="#5a5a5a"/><rect x="33.8" y="107.09" width="2.7" height="0.7" fill="#5a5a5a"/><rect x="238.63" y="68.6" width="0.7" height="3.9" fill="#5a5a5a"/><rect x="32.6" y="114.29" width="3.9" height="0.7" fill="#5a5a5a"/><rect x="245.1" y="69.8" width="0.7" height="2.7" fill="#5a5a5a"/><rect x="33.8" y="121.5" width="2.7" height="0.7" fill="#5a5a5a"/><rect x="258.05" y="69.8" width="0.7" height="2.7" fill="#5a5a5a"/><rect x="33.8" y="135.91" width="2.7" height="0.7" fill="#5a5a5a"/><rect x="264.52" y="68.6" width="0.7" height="3.9" fill="#5a5a5a"/><rect x="32.6" y="143.12" width="3.9" height="0.7" fill="#5a5a5a"/><rect x="270.99" y="69.8" width="0.7" height="2.7" fill="#5a5a5a"/><rect x="33.8" y="150.32" width="2.7" height="0.7" fill="#5a5a5a"/><rect x="283.93" y="69.8" width="0.7" height="2.7" fill="#5a5a5a"/><rect x="33.8" y="164.73" width="2.7" height="0.7" fill="#5a5a5a"/><rect x="290.41" y="68.6" width="0.7" height="3.9" fill="#5a5a5a"/><rect x="32.6" y="171.94" width="3.9" height="0.7" fill="#5a5a5a"/><rect x="296.88" y="69.8" width="0.7" height="2.7" fill="#5a5a5a"/><rect x="33.8" y="179.14" width="2.7" height="0.7" fill="#5a5a5a"/><rect x="309.82" y="69.8" width="0.7" height="2.7" fill="#5a5a5a"/><rect x="33.8" y="193.56" width="2.7" height="0.7" fill="#5a5a5a"/><rect x="316.29" y="68.6" width="0.7" height="3.9" fill="#5a5a5a"/><rect x="32.6" y="200.76" width="3.9" height="0.7" fill="#5a5a5a"/><rect x="322.77" y="69.8" width="0.7" height="2.7" fill="#5a5a5a"/><rect x="33.8" y="207.97" width="2.7" height="0.7" fill="#5a5a5a"/><rect x="335.71" y="69.8" width="0.7" height="2.7" fill="#5a5a5a"/><rect x="33.8" y="222.38" width="2.7" height="0.7" fill="#5a5a5a"/><rect x="342.18" y="68.6" width="0.7" height="3.9" fill="#5a5a5a"/><rect x="32.6" y="229.58" width="3.9" height="0.7" fill="#5a5a5a"/><rect x="348.65" y="69.8" width="0.7" height="2.7" fill="#5a5a5a"/><rect x="33.8" y="236.79" width="2.7" height="0.7" fill="#5a5a5a"/><rect x="361.6" y="69.8" width="0.7" height="2.7" fill="#5a5a5a"/><rect x="33.8" y="251.2" width="2.7" height="0.7" fill="#5a5a5a"/><rect x="368.07" y="68.6" width="0.7" height="3.9" fill="#5a5a5a"/><rect x="32.6" y="258.41" width="3.9" height="0.7" fill="#5a5a5a"/><rect x="374.54" y="69.8" width="0.7" height="2.7" fill="#5a5a5a"/><rect x="33.8" y="265.61" width="2.7" height="0.7" fill="#5a5a5a"/><rect x="387.48" y="69.8" width="0.7" height="2.7" fill="#5a5a5a"/><rect x="33.8" y="280.02" width="2.7" height="0.7" fill="#5a5a5a"/><rect x="393.95" y="68.6" width="0.7" height="3.9" fill="#5a5a5a"/><rect x="32.6" y="287.23" width="3.9" height="0.7" fill="#5a5a5a"/><rect x="400.43" y="69.8" width="0.7" height="2.7" fill="#5a5a5a"/><rect x="33.8" y="294.44" width="2.7" height="0.7" fill="#5a5a5a"/><rect x="413.37" y="69.8" width="0.7" height="2.7" fill="#5a5a5a"/><rect x="33.8" y="308.85" width="2.7" height="0.7" fill="#5a5a5a"/><rect x="419.84" y="68.6" width="0.7" height="3.9" fill="#5a5a5a"/><rect x="32.6" y="316.05" width="3.9" height="0.7" fill="#5a5a5a"/><rect x="426.31" y="69.8" width="0.7" height="2.7" fill="#5a5a5a"/><rect x="33.8" y="323.26" width="2.7" height="0.7" fill="#5a5a5a"/><rect x="439.26" y="69.8" width="0.7" height="2.7" fill="#5a5a5a"/><rect x="33.8" y="337.67" width="2.7" height="0.7" fill="#5a5a5a"/><rect x="445.73" y="68.6" width="0.7" height="3.9" fill="#5a5a5a"/><rect x="32.6" y="344.87" width="3.9" height="0.7" fill="#5a5a5a"/><rect x="452.2" y="69.8" width="0.7" height="2.7" fill="#5a5a5a"/><rect x="33.8" y="352.08" width="2.7" height="0.7" fill="#5a5a5a"/><rect x="465.14" y="69.8" width="0.7" height="2.7" fill="#5a5a5a"/><rect x="33.8" y="366.49" width="2.7" height="0.7" fill="#5a5a5a"/><rect x="471.62" y="68.6" width="0.7" height="3.9" fill="#5a5a5a"/><rect x="32.6" y="373.7" width="3.9" height="0.7" fill="#5a5a5a"/><rect x="478.09" y="69.8" width="0.7" height="2.7" fill="#5a5a5a"/><rect x="33.8" y="380.9" width="2.7" height="0.7" fill="#5a5a5a"/><rect x="491.03" y="69.8" width="0.7" height="2.7" fill="#5a5a5a"/><rect x="33.8" y="395.31" width="2.7" height="0.7" fill="#5a5a5a"/><rect x="497.5" y="68.6" width="0.7" height="3.9" fill="#5a5a5a"/><rect x="32.6" y="402.52" width="3.9" height="0.7" fill="#5a5a5a"/><rect x="503.98" y="69.8" width="0.7" height="2.7" fill="#5a5a5a"/><rect x="33.8" y="409.73" width="2.7" height="0.7" fill="#5a5a5a"/><rect x="516.92" y="69.8" width="0.7" height="2.7" fill="#5a5a5a"/><rect x="33.8" y="424.14" width="2.7" height="0.7" fill="#5a5a5a"/><rect x="523.39" y="68.6" width="0.7" height="3.9" fill="#5a5a5a"/><rect x="32.6" y="431.34" width="3.9" height="0.7" fill="#5a5a5a"/><rect x="529.86" y="69.8" width="0.7" height="2.7" fill="#5a5a5a"/><rect x="33.8" y="438.55" width="2.7" height="0.7" fill="#5a5a5a"/><rect x="542.81" y="69.8" width="0.7" height="2.7" fill="#5a5a5a"/><rect x="33.8" y="452.96" width="2.7" height="0.7" fill="#5a5a5a"/><rect x="549.28" y="68.6" width="0.7" height="3.9" fill="#5a5a5a"/><rect x="32.6" y="460.17" width="3.9" height="0.7" fill="#5a5a5a"/><rect x="555.75" y="69.8" width="0.7" height="2.7" fill="#5a5a5a"/><rect x="33.8" y="467.37" width="2.7" height="0.7" fill="#5a5a5a"/><rect x="568.69" y="69.8" width="0.7" height="2.7" fill="#5a5a5a"/><rect x="33.8" y="481.78" width="2.7" height="0.7" fill="#5a5a5a"/><rect x="575.16" y="68.6" width="0.7" height="3.9" fill="#5a5a5a"/><rect x="32.6" y="488.99" width="3.9" height="0.7" fill="#5a5a5a"/><rect x="581.64" y="69.8" width="0.7" height="2.7" fill="#5a5a5a"/><rect x="33.8" y="496.19" width="2.7" height="0.7" fill="#5a5a5a"/><rect x="594.58" y="69.8" width="0.7" height="2.7" fill="#5a5a5a"/><rect x="33.8" y="510.61" width="2.7" height="0.7" fill="#5a5a5a"/><rect x="601.05" y="68.6" width="0.7" height="3.9" fill="#5a5a5a"/><rect x="32.6" y="517.81" width="3.9" height="0.7" fill="#5a5a5a"/><rect x="607.52" y="69.8" width="0.7" height="2.7" fill="#5a5a5a"/><rect x="33.8" y="525.02" width="2.7" height="0.7" fill="#5a5a5a"/><rect x="620.47" y="69.8" width="0.7" height="2.7" fill="#5a5a5a"/><rect x="33.8" y="539.43" width="2.7" height="0.7" fill="#5a5a5a"/><rect x="626.94" y="68.6" width="0.7" height="3.9" fill="#5a5a5a"/><rect x="32.6" y="546.63" width="3.9" height="0.7" fill="#5a5a5a"/><rect x="633.41" y="69.8" width="0.7" height="2.7" fill="#5a5a5a"/><rect x="33.8" y="553.84" width="2.7" height="0.7" fill="#5a5a5a"/><rect x="646.35" y="69.8" width="0.7" height="2.7" fill="#5a5a5a"/><rect x="33.8" y="568.25" width="2.7" height="0.7" fill="#5a5a5a"/><rect x="652.83" y="68.6" width="0.7" height="3.9" fill="#5a5a5a"/><rect x="32.6" y="575.46" width="3.9" height="0.7" fill="#5a5a5a"/><rect x="659.3" y="69.8" width="0.7" height="2.7" fill="#5a5a5a"/><rect x="33.8" y="582.66" width="2.7" height="0.7" fill="#5a5a5a"/><rect x="672.24" y="69.8" width="0.7" height="2.7" fill="#5a5a5a"/><rect x="33.8" y="597.07" width="2.7" height="0.7" fill="#5a5a5a"/><rect x="678.71" y="68.6" width="0.7" height="3.9" fill="#5a5a5a"/><rect x="32.6" y="604.28" width="3.9" height="0.7" fill="#5a5a5a"/><rect x="685.18" y="69.8" width="0.7" height="2.7" fill="#5a5a5a"/><rect x="33.8" y="611.48" width="2.7" height="0.7" fill="#5a5a5a"/><rect x="698.13" y="69.8" width="0.7" height="2.7" fill="#5a5a5a"/><rect x="33.8" y="625.9" width="2.7" height="0.7" fill="#5a5a5a"/><rect x="704.6" y="68.6" width="0.7" height="3.9" fill="#5a5a5a"/><rect x="32.6" y="633.1" width="3.9" height="0.7" fill="#5a5a5a"/><rect x="711.07" y="69.8" width="0.7" height="2.7" fill="#5a5a5a"/><rect x="33.8" y="640.31" width="2.7" height="0.7" fill="#5a5a5a"/><rect x="724.02" y="69.8" width="0.7" height="2.7" fill="#5a5a5a"/><rect x="33.8" y="654.72" width="2.7" height="0.7" fill="#5a5a5a"/><rect x="730.49" y="68.6" width="0.7" height="3.9" fill="#5a5a5a"/><rect x="32.6" y="661.92" width="3.9" height="0.7" fill="#5a5a5a"/><rect x="736.96" y="69.8" width="0.7" height="2.7" fill="#5a5a5a"/><rect x="33.8" y="669.13" width="2.7" height="0.7" fill="#5a5a5a"/><rect x="749.9" y="69.8" width="0.7" height="2.7" fill="#5a5a5a"/><rect x="33.8" y="683.54" width="2.7" height="0.7" fill="#5a5a5a"/><rect x="756.37" y="68.6" width="0.7" height="3.9" fill="#5a5a5a"/><rect x="32.6" y="690.75" width="3.9" height="0.7" fill="#5a5a5a"/><rect x="762.85" y="69.8" width="0.7" height="2.7" fill="#5a5a5a"/><rect x="33.8" y="697.95" width="2.7" height="0.7" fill="#5a5a5a"/><rect x="775.79" y="69.8" width="0.7" height="2.7" fill="#5a5a5a"/><rect x="782.26" y="68.6" width="0.7" height="3.9" fill="#5a5a5a"/><rect x="788.73" y="69.8" width="0.7" height="2.7" fill="#5a5a5a"/><rect x="801.68" y="69.8" width="0.7" height="2.7" fill="#5a5a5a"/><rect x="808.15" y="68.6" width="0.7" height="3.9" fill="#5a5a5a"/><rect x="814.62" y="69.8" width="0.7" height="2.7" fill="#5a5a5a"/><rect x="827.56" y="69.8" width="0.7" height="2.7" fill="#5a5a5a"/><rect x="834.04" y="68.6" width="0.7" height="3.9" fill="#5a5a5a"/><rect x="840.51" y="69.8" width="0.7" height="2.7" fill="#5a5a5a"/><rect x="853.45" y="69.8" width="0.7" height="2.7" fill="#5a5a5a"/></svg>
<div class="a" style="left:25.5px;top:60.8px;width:11px;height:11.7px;background:#4a4a4a;"></div>
<svg style="left:25.5px;top:60.5px;" width="11" height="12" viewBox="0 0 11 12"><path d="M5.5 1 V12 M0 6.5 H11" stroke="#565656" stroke-width="0.6" stroke-dasharray="1 1"/></svg>
<div class="a" style="left:303.6px;top:186.9px;width:288.7px;height:411px;background:#fff;"></div>
<svg style="left:303.6px;top:186.9px;overflow:hidden" width="288.7" height="411" viewBox="0 0 288.7 411"><defs><pattern id="ck" width="10.0" height="10.832" patternUnits="userSpaceOnUse"><rect x="5.0" y="0" width="5.0" height="5.416" fill="#cbcbcb"/><rect x="0" y="5.416" width="5.0" height="5.416" fill="#cbcbcb"/></pattern></defs><rect width="288.7" height="411" fill="url(#ck)"/></svg>
<div class="a" style="left:323px;top:70.3px;width:1.3px;height:640.7px;background:rgba(85,242,222,0.5);"></div>
<div class="a" style="left:571.6px;top:70.3px;width:1.3px;height:640.7px;background:rgba(85,242,222,0.5);"></div>
<div class="a" style="left:33.4px;top:209.7px;width:825.3px;height:1.35px;background:rgba(85,242,222,0.5);"></div>
<div class="a" style="left:33.4px;top:574px;width:825.3px;height:1.35px;background:rgba(85,242,222,0.5);"></div>
<div class="a" style="left:389px;top:163.5px;width:302px;height:392.5px;background:#fff;"></div>
<svg style="left:0px;top:0px;" width="1080" height="720" viewBox="0 0 1080 720"><defs><linearGradient id="lgo" x1="0" y1="0" x2="0.3" y2="1"><stop offset="0" stop-color="#fbb64a"/><stop offset="0.25" stop-color="#f6a623"/><stop offset="1" stop-color="#f39a25"/></linearGradient><linearGradient id="lgr" x1="0" y1="0" x2="0.4" y2="1"><stop offset="0" stop-color="#f4563f"/><stop offset="1" stop-color="#ec6244"/></linearGradient></defs><rect x="535" y="176.4" width="49.2" height="39.8" fill="url(#lgo)"/><path d="M535 202.5 L546.3 191.6 L555.4 202.2 L564 191.6 L572.6 202.2 L584.2 191.6 V216.2 H535Z" fill="url(#lgr)"/><clipPath id="lcp"><rect x="535" y="176.4" width="49.2" height="39.8"/></clipPath><path clip-path="url(#lcp)" d="M533 204.1 L546.3 191.3 L555.4 201.9 L564 191.3 L572.6 201.9 L586.2 189.5" fill="none" stroke="#1d1416" stroke-width="3.7" stroke-linejoin="round"/><path d="M545.3 201.2 l1.7 -2.5 l1.7 2.5z" fill="#1d1416"/><rect x="535" y="176.4" width="49.2" height="39.8" fill="none" stroke="#e9805a" stroke-width="0.5" opacity="0.6"/></svg>
<div class="t b n" dir="rtl" style="left:614.7px;top:183.3px;font-size:11.5px;line-height:13px;color:#2a2426;transform:scaleX(.958);font-family:'DejaVu Sans','Liberation Sans',sans-serif">التجاري وفا</div>
<div class="t n" dir="rtl" style="left:592px;top:183.3px;font-size:11.5px;line-height:13px;color:#ee8d7c;transform:scaleX(1.245);font-family:'DejaVu Sans','Liberation Sans',sans-serif">بنك</div>
<div class="t b n" style="left:593px;top:180px;font-size:46.4px;color:#231f20;transform:scale(0.2371,0.25);">Attijariwafa</div>
<div class="t n" style="left:654.6px;top:180.2px;font-size:46.4px;color:#ef9384;transform:scale(0.2256,0.25);">bank</div>
<div class="t n" style="left:405.2px;top:208.2px;font-size:18px;color:#2b2b2b;transform:scale(0.2516,0.25);">2 Blvd Moulay Youssef, Casablanca</div>
<div class="t n" style="left:405.2px;top:214.15px;font-size:18px;color:#2b2b2b;transform:scale(0.2519,0.25);">Grand Casablanca, 20 000, Morocco</div>
<div class="t n" style="left:405.2px;top:220.1px;font-size:18px;color:#2b2b2b;transform:scale(0.2547,0.25);">+212-522298888</div>
<div class="t b n" style="left:405.2px;top:232.5px;font-size:18px;color:#161616;transform:scale(0.2247,0.25);">Small Business, LLC</div>
<div class="t b n" style="left:405.2px;top:238.62px;font-size:18px;color:#161616;transform:scale(0.2428,0.25);">Mr. John Citizen</div>
<div class="t b n" style="left:405.2px;top:244.74px;font-size:18px;color:#161616;transform:scale(0.2541,0.25);">345 Maple Street</div>
<div class="t b n" style="left:405.2px;top:250.86px;font-size:18px;color:#161616;transform:scale(0.2490,0.25);">Capital City, OH 12345-0123</div>
<div class="t b n" style="left:405.2px;top:256.98px;font-size:18px;color:#161616;transform:scale(0.2561,0.25);">123-555-5678</div>
<div class="t n" style="left:579.1px;top:237.3px;font-size:18px;color:#2b2b2b;transform:scale(0.2527,0.25);">Account Name:</div>
<div class="t b n" style="left:612px;top:237.3px;font-size:18px;color:#161616;transform:scale(0.2301,0.25);">Small Business Checking</div>
<div class="t n" style="left:579.1px;top:243.2px;font-size:18px;color:#2b2b2b;transform:scale(0.2510,0.25);">Account Number:</div>
<div class="t b n" style="left:616.1px;top:243.2px;font-size:18px;color:#161616;transform:scale(0.2622,0.25);">000000012345</div>
<div class="t n" style="left:579.1px;top:255px;font-size:18px;color:#2b2b2b;transform:scale(0.2651,0.25);">Statement Period: 03/01/2023 to 04/01/2023</div>
<div class="t" style="left:405.2px;top:272.6px;font-size:20px;color:#ee3547;transform:scale(0.2637,0.25);">ACCOUNT SUMMARY</div>
<div class="t n" style="left:405.2px;top:285px;font-size:18px;color:#2b2b2b;transform:scale(0.2459,0.25);">Balance on March 1:</div>
<div class="t n" style="left:479.3px;top:285px;font-size:18px;color:#2b2b2b;transform:scale(0.2665,0.25);">MAD27,584.98</div>
<div class="t n" style="left:405.2px;top:292.1px;font-size:18px;color:#2b2b2b;transform:scale(0.2569,0.25);">Total money in:</div>
<div class="t n" style="left:479.3px;top:292.1px;font-size:18px;color:#2b2b2b;transform:scale(0.2665,0.25);">MAD10,273.99</div>
<div class="t n" style="left:405.2px;top:299.2px;font-size:18px;color:#2b2b2b;transform:scale(0.2582,0.25);">Total money out:</div>
<div class="t n" style="left:479.3px;top:299.2px;font-size:18px;color:#2b2b2b;transform:scale(0.2665,0.25);">MAD10,510.07</div>
<div class="t n" style="left:405.2px;top:306.9px;font-size:18px;color:#2b2b2b;transform:scale(0.2565,0.25);">Balance on April 1:</div>
<div class="t n" style="left:479.3px;top:306.9px;font-size:18px;color:#2b2b2b;transform:scale(0.2665,0.25);">MAD27,247.70</div>
<div class="a" style="left:402.7px;top:326.6px;width:275.2px;height:14.4px;background:#f53a48;"></div>
<div class="t n" style="left:413px;top:324.8px;font-size:18px;color:#ffe9e9;transform:scale(0.2571,0.25);">DATE</div>
<div class="t n" style="left:438.2px;top:324.8px;font-size:18px;color:#ffe9e9;transform:scale(0.2666,0.25);">DESCRIPTION</div>
<div class="t n" style="left:553.6px;top:324.8px;font-size:18px;color:#ffe9e9;transform:scale(0.2910,0.25);">WITHDRAWAL</div>
<div class="t n" style="left:609.6px;top:324.8px;font-size:18px;color:#ffe9e9;transform:scale(0.2708,0.25);">DEPOSIT</div>
<div class="t n" style="left:652.6px;top:324.8px;font-size:18px;color:#ffe9e9;transform:scale(0.2666,0.25);">BALANCE</div>
<div class="a" style="left:402.7px;top:341px;width:275.2px;height:8.4px;background:#fcb01a;"></div>
<div class="t b n" style="left:438.2px;top:336.8px;font-size:18.4px;color:#111;transform:scale(0.2762,0.25);">Previous balance</div>
<div class="t b n" style="left:648.3px;top:336.8px;font-size:18.4px;color:#111;transform:scale(0.2773,0.25);">27,584.38</div>
<div class="a" style="left:402.7px;top:361.6px;width:275.2px;height:10.1px;background:#fdf4f4;"></div>
<div class="a" style="left:402.7px;top:390.3px;width:275.2px;height:10.9px;background:#fdf4f4;"></div>
<div class="a" style="left:402.7px;top:412.5px;width:275.2px;height:18.5px;background:#fdf4f4;"></div>
<div class="a" style="left:402.7px;top:442.4px;width:275.2px;height:17.2px;background:#fdf4f4;"></div>
<div class="a" style="left:402.7px;top:471.7px;width:275.2px;height:10px;background:#fdf4f4;"></div>
<div class="t n" style="left:412.5px;top:346.3px;font-size:18px;color:#2c2c2c;transform:scale(0.2820,0.25);">03/02</div>
<div class="t n" style="left:438.2px;top:346.1px;font-size:18.4px;color:#2c2c2c;transform:scale(0.2437,0.25);">Internet Bill</div>
<div class="t n" style="left:553.6px;top:346.3px;font-size:18px;color:#2c2c2c;transform:scale(0.2800,0.25);">75.99</div>
<div class="t n" style="left:648.38px;top:346.3px;font-size:18px;color:#2c2c2c;transform:scale(0.2800,0.25);">27,508.39</div>
<div class="t n" style="left:412.5px;top:357.5px;font-size:18px;color:#2c2c2c;transform:scale(0.2820,0.25);">03/05</div>
<div class="t n" style="left:438.2px;top:357.3px;font-size:18.4px;color:#2c2c2c;transform:scale(0.2437,0.25);">Electric Bill</div>
<div class="t n" style="left:553.6px;top:357.5px;font-size:18px;color:#2c2c2c;transform:scale(0.2800,0.25);">353.68</div>
<div class="t n" style="left:648.38px;top:357.5px;font-size:18px;color:#2c2c2c;transform:scale(0.2800,0.25);">27,154.71</div>
<div class="t n" style="left:412.5px;top:371.8px;font-size:18px;color:#2c2c2c;transform:scale(0.2820,0.25);">03/06</div>
<div class="t n" style="left:438.2px;top:367.6px;font-size:18.4px;color:#2c2c2c;transform:scale(0.2437,0.25);">Check No. 4583</div>
<div class="t i n" style="left:438.2px;top:376px;font-size:18.4px;color:#222;transform:scale(0.2437,0.25);">Payment from Lisa Williams</div>
<div class="t n" style="left:612.89px;top:369px;font-size:18px;color:#2c2c2c;transform:scale(0.2800,0.25);">456.84</div>
<div class="t n" style="left:648.75px;top:369px;font-size:18px;color:#2c2c2c;transform:scale(0.2800,0.25);">27,711.55</div>
<div class="t n" style="left:412.5px;top:387px;font-size:18px;color:#2c2c2c;transform:scale(0.2820,0.25);">03/10</div>
<div class="t n" style="left:438.2px;top:386.8px;font-size:18.4px;color:#2c2c2c;transform:scale(0.2437,0.25);">Deposit from Credit Card Processor</div>
<div class="t n" style="left:610.79px;top:387px;font-size:18px;color:#2c2c2c;transform:scale(0.2800,0.25);">5,891.26</div>
<div class="t n" style="left:648.38px;top:387px;font-size:18px;color:#2c2c2c;transform:scale(0.2800,0.25);">33,602.81</div>
<div class="t n" style="left:412.5px;top:398px;font-size:18px;color:#2c2c2c;transform:scale(0.2820,0.25);">03/12</div>
<div class="t n" style="left:438.2px;top:397.8px;font-size:18.4px;color:#2c2c2c;transform:scale(0.2437,0.25);">Payroll Run</div>
<div class="t n" style="left:553.6px;top:398px;font-size:18px;color:#2c2c2c;transform:scale(0.2800,0.25);">3,894.75</div>
<div class="t n" style="left:648.38px;top:398px;font-size:18px;color:#2c2c2c;transform:scale(0.2800,0.25);">29,708.06</div>
<div class="t n" style="left:412.5px;top:412.5px;font-size:18px;color:#2c2c2c;transform:scale(0.2820,0.25);">03/16</div>
<div class="t n" style="left:438.2px;top:408.4px;font-size:18.4px;color:#2c2c2c;transform:scale(0.2437,0.25);">Debit Transaction</div>
<div class="t i n" style="left:438.2px;top:416.4px;font-size:18.4px;color:#222;transform:scale(0.2437,0.25);">Main Office Wholesale</div>
<div class="t n" style="left:553.6px;top:409.2px;font-size:18px;color:#2c2c2c;transform:scale(0.2800,0.25);">243.36</div>
<div class="t n" style="left:648.38px;top:409.2px;font-size:18px;color:#2c2c2c;transform:scale(0.2800,0.25);">29,464.06</div>
<div class="t n" style="left:412.5px;top:427.6px;font-size:18px;color:#2c2c2c;transform:scale(0.2820,0.25);">03/21</div>
<div class="t n" style="left:438.2px;top:427.4px;font-size:18.4px;color:#2c2c2c;transform:scale(0.2437,0.25);">Rent Bill</div>
<div class="t n" style="left:553.6px;top:427.6px;font-size:18px;color:#2c2c2c;transform:scale(0.2800,0.25);">750.00</div>
<div class="t n" style="left:612.89px;top:427.6px;font-size:18px;color:#2c2c2c;transform:scale(0.2800,0.25);">268.84</div>
<div class="t n" style="left:648.38px;top:427.6px;font-size:18px;color:#2c2c2c;transform:scale(0.2800,0.25);">28,714.60</div>
<div class="t n" style="left:412.5px;top:442px;font-size:18px;color:#2c2c2c;transform:scale(0.2820,0.25);">03/21</div>
<div class="t n" style="left:438.2px;top:438.1px;font-size:18.4px;color:#2c2c2c;transform:scale(0.2437,0.25);">Check No. 234</div>
<div class="t i n" style="left:438.2px;top:445.8px;font-size:18.4px;color:#222;transform:scale(0.2437,0.25);">Payment from Mark Moore</div>
<div class="t n" style="left:648.38px;top:438.6px;font-size:18px;color:#2c2c2c;transform:scale(0.2800,0.25);">28,083.44</div>
<div class="t n" style="left:412.5px;top:457px;font-size:18px;color:#2c2c2c;transform:scale(0.2820,0.25);">03/26</div>
<div class="t n" style="left:438.2px;top:456.8px;font-size:18.4px;color:#2c2c2c;transform:scale(0.2437,0.25);">Payroll Run</div>
<div class="t n" style="left:553.6px;top:457px;font-size:18px;color:#2c2c2c;transform:scale(0.2800,0.25);">3,743.23</div>
<div class="t n" style="left:648.38px;top:457px;font-size:18px;color:#2c2c2c;transform:scale(0.2800,0.25);">25,240.21</div>
<div class="t n" style="left:412.5px;top:467.8px;font-size:18px;color:#2c2c2c;transform:scale(0.2820,0.25);">03/28</div>
<div class="t n" style="left:438.2px;top:467.6px;font-size:18.4px;color:#2c2c2c;transform:scale(0.2437,0.25);">Deposit</div>
<div class="t n" style="left:610.79px;top:467.8px;font-size:18px;color:#2c2c2c;transform:scale(0.2800,0.25);">3,656.45</div>
<div class="t n" style="left:648.38px;top:467.8px;font-size:18px;color:#2c2c2c;transform:scale(0.2800,0.25);">28,896.66</div>
<div class="t n" style="left:412.5px;top:483px;font-size:18px;color:#2c2c2c;transform:scale(0.2820,0.25);">03/29</div>
<div class="t n" style="left:438.2px;top:478.8px;font-size:18.4px;color:#2c2c2c;transform:scale(0.2437,0.25);">Debit Transaction</div>
<div class="t i n" style="left:438.2px;top:486.6px;font-size:18.4px;color:#222;transform:scale(0.2437,0.25);">ABC Business Supplies</div>
<div class="t n" style="left:553.6px;top:479.6px;font-size:18px;color:#2c2c2c;transform:scale(0.2800,0.25);">1,548.96</div>
<div class="t n" style="left:648.38px;top:479.6px;font-size:18px;color:#2c2c2c;transform:scale(0.2800,0.25);">27,347.70</div>
<div class="a" style="left:402.7px;top:504px;width:275.2px;height:10.7px;background:#fcb01a;"></div>
<div class="t b n" style="left:438.2px;top:500.5px;font-size:18px;color:#1c1c1c;transform:scale(0.2600,0.25);">Ending Balance</div>
<div class="t b i n" style="left:652.6px;top:500.5px;font-size:18px;color:#1c1c1c;transform:scale(0.2798,0.25);">27,347.70</div>
<svg style="left:0px;top:0px;" width="1080" height="720" viewBox="0 0 1080 720"><path d="M889.8 42.6 l-1.5 1.8 l1.5 1.8z M892.4 42.6 l-1.5 1.8 l1.5 1.8z" fill="#c8c8c8"/><path d="M1067.6 42.6 l1.5 1.8 l-1.5 1.8z M1070.2 42.6 l1.5 1.8 l-1.5 1.8z" fill="#c8c8c8"/><path d="M875.4 60 h3.6 M875.4 62.2 h3.6 M875.4 64.4 h2.6" stroke="#dcdcdc" stroke-width="1"/><path d="M888 60 l1.5 1.4 l-5.2 6.4 l-2 -1.8z" fill="#dcdcdc"/><path d="M881.6 66.6 l2.1 1.9 q-1.4 2.6 -5 2.2 q1 -3.4 2.9 -4.1z" fill="#dcdcdc"/><circle cx="879.3" cy="81.3" r="2" fill="#dcdcdc"/><path d="M881 81.3 h7.4" stroke="#dcdcdc" stroke-width="1.1"/><path d="M877 87.4 h7.4" stroke="#dcdcdc" stroke-width="1.3"/><path d="M884 87.4 l5.2 -3.2 v6.4z" fill="#dcdcdc"/><rect x="874" y="97" width="18" height="0.8" fill="#454545"/><rect x="874" y="146" width="18" height="0.8" fill="#454545"/><rect x="874" y="174" width="18" height="0.8" fill="#454545"/><rect x="871" y="201" width="24" height="1" fill="#3c3c3c"/><path d="M882.7 183.9 l5 2.6 v6 l-5 2.9 l-5 -2.9 v-6z M877.7 186.5 l5 2.7 l5 -2.7 M882.7 189.2 v6.2" fill="none" stroke="#dcdcdc" stroke-width="0.9"/></svg>
<div class="t" style="left:877.5px;top:89.5px;font-size:46px;color:#dcdcdc;transform:scale(0.2375,0.25);">A</div>
<div class="a" style="left:886.4px;top:107.4px;width:0.9px;height:11px;background:#dcdcdc;"></div>
<div class="t b" style="left:878.4px;top:104.4px;font-size:58px;color:#dcdcdc;transform:scale(0.2450,0.25);">&para;</div>
<div class="t i b n" style="left:876.6px;top:152.3px;font-size:16.5px;color:#dcdcdc;font-family:'Liberation Serif',serif;transform:scaleX(.92)">A</div>
<div class="a" style="left:877.4px;top:159.4px;width:4px;height:0.8px;background:#dcdcdc;"></div>
<div class="a" style="left:896px;top:48.5px;width:179px;height:19.3px;background:#424242;"></div>
<div class="a" style="left:897px;top:49.5px;width:112.5px;height:18.3px;background:#454545;"></div>
<div class="a" style="left:920.2px;top:49.5px;width:0.9px;height:18.3px;background:#3e3e3e;"></div>
<div class="a" style="left:943.2px;top:49.5px;width:0.9px;height:18.3px;background:#3e3e3e;"></div>
<div class="a" style="left:966.2px;top:49.5px;width:0.9px;height:18.3px;background:#3e3e3e;"></div>
<div class="a" style="left:989px;top:49.5px;width:0.9px;height:18.3px;background:#3e3e3e;"></div>
<div class="t b" style="left:901.5px;top:43.5px;font-size:29.6px;color:#b9b9b9;transform:scale(0.1753,0.25);">Swatc</div>
<div class="t b" style="left:924px;top:43.5px;font-size:29.6px;color:#b9b9b9;transform:scale(0.2005,0.25);">Gradi</div>
<div class="t b" style="left:947px;top:43.5px;font-size:29.6px;color:#b9b9b9;transform:scale(0.1967,0.25);">Patter</div>
<div class="t b" style="left:969.5px;top:43.5px;font-size:29.6px;color:#b9b9b9;transform:scale(0.1929,0.25);">Histor</div>
<div class="t b" style="left:992px;top:43.5px;font-size:29.6px;color:#b9b9b9;transform:scale(0.1929,0.25);">Actior</div>
<div class="a" style="left:1009.7px;top:49px;width:40.5px;height:19px;background:#535353;"></div>
<div class="t b" style="left:1013.8px;top:43.1px;font-size:30.4px;color:#f4f4f4;transform:scale(0.2108,0.25);">Properties</div>
<svg style="left:0px;top:0px;" width="1080" height="720" viewBox="0 0 1080 720"><rect x="1065.8" y="56.2" width="6" height="0.95" fill="#cfcfcf"/><rect x="1065.8" y="58.4" width="6" height="0.95" fill="#cfcfcf"/><rect x="1065.8" y="60.6" width="6" height="0.95" fill="#cfcfcf"/></svg>
<div class="a" style="left:896px;top:67.8px;width:179px;height:316.9px;background:#535353;"></div>
<div class="a" style="left:896px;top:67.8px;width:0.8px;height:316.9px;background:#484848;"></div>
<div class="a" style="left:903px;top:74px;width:13.4px;height:13.2px;background:#393939;"></div>
<svg style="left:0px;top:0px;" width="1080" height="720" viewBox="0 0 1080 720"><path d="M906.6 76.6 h3.6 l2.6 2.6 v5.6 h-6.2z M910.2 76.6 v2.6 h2.6" fill="none" stroke="#e0e0e0" stroke-width="1"/></svg>
<div class="t" style="left:920.4px;top:67px;font-size:29.6px;color:#d6d6d6;transform:scale(0.2083,0.25);">Document</div>
<div class="a" style="left:897px;top:92px;width:169px;height:1px;background:#474747;"></div>
<svg style="left:0px;top:0px;" width="1080" height="720" viewBox="0 0 1080 720"><path d="M899.9000000000001 100.80000000000001 L902.2 103.0 L904.5 100.80000000000001" stroke="#a8a8a8" stroke-width="0.9" fill="none"/></svg>
<div class="t b" style="left:909.6px;top:87.3px;font-size:30.4px;color:#f0f0f0;transform:scale(0.2071,0.25);">Canvas</div>
<svg style="left:0px;top:0px;" width="1080" height="720" viewBox="0 0 1080 720"><rect x="907.4" y="123" width="3.8" height="4.6" rx="1.8" fill="none" stroke="#d0d0d0" stroke-width="1"/><rect x="907.4" y="129.2" width="3.8" height="4.6" rx="1.8" fill="none" stroke="#d0d0d0" stroke-width="1"/><rect x="908.85" y="126" width="0.9" height="5" fill="#d0d0d0"/></svg>
<div class="t" style="left:929.2px;top:105.6px;font-size:28.8px;color:#cfcfcf;transform:scale(0.2207,0.25);">W</div>
<div class="a" style="left:939.2px;top:115px;width:29.8px;height:9.8px;background:#424242;"></div>
<div class="t" style="left:941.6px;top:105.8px;font-size:28.8px;color:#efefef;transform:scale(0.1991,0.25);">2232 px</div>
<div class="t" style="left:930.4px;top:123px;font-size:28.8px;color:#cfcfcf;transform:scale(0.2212,0.25);">H</div>
<div class="a" style="left:939.2px;top:132.4px;width:29.8px;height:9.8px;background:#424242;"></div>
<div class="t" style="left:941.6px;top:123.2px;font-size:28.8px;color:#efefef;transform:scale(0.1991,0.25);">2854 px</div>
<div class="t" style="left:981.2px;top:105.6px;font-size:28.8px;color:#cfcfcf;transform:scale(0.2395,0.25);">X</div>
<div class="a" style="left:989.5px;top:115px;width:31.5px;height:9.8px;background:#4c4c4c;"></div>
<div class="t" style="left:992px;top:106.2px;font-size:28px;color:#6c6c6c;transform:scale(0.2268,0.25);">0 px</div>
<div class="t" style="left:981.2px;top:123px;font-size:28.8px;color:#cfcfcf;transform:scale(0.2395,0.25);">Y</div>
<div class="a" style="left:989.5px;top:132.4px;width:31.5px;height:9.8px;background:#4c4c4c;"></div>
<div class="t" style="left:992px;top:123.6px;font-size:28px;color:#6c6c6c;transform:scale(0.2268,0.25);">0 px</div>
<div class="a" style="left:939px;top:152px;width:13.6px;height:15px;background:#363636;"></div>
<svg style="left:0px;top:0px;" width="1080" height="720" viewBox="0 0 1080 720"><rect x="941.8" y="154.4" width="8" height="10.4" fill="none" stroke="#e2e2e2" stroke-width="0.9"/><circle cx="945.8" cy="158" r="1.3" fill="#e2e2e2"/><path d="M943.6 164.6 v-2.6 q0 -1.8 2.2 -1.8 q2.2 0 2.2 1.8 v2.6z" fill="#e2e2e2"/><rect x="957.2" y="155.6" width="10.6" height="8" fill="none" stroke="#d6d6d6" stroke-width="0.9"/><circle cx="962.5" cy="158.6" r="1.2" fill="#d6d6d6"/><path d="M960 163.4 v-1.6 q0 -1.6 2.5 -1.6 q2.5 0 2.5 1.6 v1.6z" fill="#d6d6d6"/></svg>
<div class="t" style="left:939.2px;top:165.4px;font-size:28.8px;color:#d8d8d8;transform:scale(0.2125,0.25);">Resolution: 250 pixels/inch</div>
<div class="t" style="left:918.8px;top:183.2px;font-size:28.8px;color:#cfcfcf;transform:scale(0.2110,0.25);">Mode</div>
<div class="a" style="left:939.2px;top:192px;width:81.8px;height:12.6px;background:#424242;"></div>
<div class="t" style="left:943.2px;top:184px;font-size:28.8px;color:#ececec;transform:scale(0.1997,0.25);">RGB Color</div>
<svg style="left:0px;top:0px;" width="1080" height="720" viewBox="0 0 1080 720"><path d="M1014.5 197.8 L1016.4 199.40000000000003 L1018.3 197.8" stroke="#b0b0b0" stroke-width="0.9" fill="none"/></svg>
<div class="a" style="left:939.2px;top:209.6px;width:81.8px;height:13.2px;background:#424242;"></div>
<div class="t" style="left:943.2px;top:201.9px;font-size:28.8px;color:#ececec;transform:scale(0.2203,0.25);">16 Bits/Channel</div>
<svg style="left:0px;top:0px;" width="1080" height="720" viewBox="0 0 1080 720"><path d="M1014.5 215.7 L1016.4 217.3 L1018.3 215.7" stroke="#b0b0b0" stroke-width="0.9" fill="none"/></svg>
<div class="t" style="left:926.2px;top:220.2px;font-size:28.8px;color:#cfcfcf;transform:scale(0.2120,0.25);">Fill</div>
<div class="a" style="left:939.4px;top:228.4px;width:10.6px;height:12px;background:#555;border:1px solid #444"></div>
<div class="a" style="left:953.4px;top:229px;width:67.6px;height:11.6px;background:#424242;"></div>
<div class="t" style="left:957.4px;top:220.5px;font-size:28.8px;color:#ececec;transform:scale(0.2244,0.25);">Transparent</div>
<svg style="left:0px;top:0px;" width="1080" height="720" viewBox="0 0 1080 720"><path d="M1014.5 234.3 L1016.4 235.90000000000003 L1018.3 234.3" stroke="#b0b0b0" stroke-width="0.9" fill="none"/></svg>
<div class="a" style="left:897px;top:247px;width:169px;height:1px;background:#474747;"></div>
<svg style="left:0px;top:0px;" width="1080" height="720" viewBox="0 0 1080 720"><path d="M899.9000000000001 255.99999999999997 L902.2 258.2 L904.5 255.99999999999997" stroke="#a8a8a8" stroke-width="0.9" fill="none"/></svg>
<div class="t b" style="left:909.6px;top:242.5px;font-size:30.4px;color:#f0f0f0;transform:scale(0.2133,0.25);">Rulers &amp; Grids</div>
<div class="a" style="left:903px;top:270.4px;width:14.8px;height:16px;background:#363636;"></div>
<svg style="left:0px;top:0px;" width="1080" height="720" viewBox="0 0 1080 720"><path d="M906 273.2 h9.4 v2.4 h-7 v8.2 h-2.4z" fill="#ececec"/><path d="M909 273.2 v1.2 M911 273.2 v1.2 M913 273.2 v1.2 M906 276.6 h1.2 M906 278.6 h1.2 M906 280.6 h1.2" stroke="#555" stroke-width="0.5"/><path d="M925.8 272.4 h10.8 v11.4 h-10.8z M929.4 272.4 v11.4 M933 272.4 v11.4 M925.8 276.2 h10.8 M925.8 280 h10.8" fill="none" stroke="#d8d8d8" stroke-width="0.8"/><rect x="946.6" y="272.4" width="10" height="11.6" fill="#6a6a6a" stroke="#d0d0d0" stroke-width="0.8"/><rect x="948.4" y="274.4" width="6.4" height="7.6" fill="none" stroke="#aaa" stroke-width="0.5" stroke-dasharray="0.8 0.8"/></svg>
<div class="a" style="left:975.4px;top:272.3px;width:45.6px;height:12.3px;background:#424242;"></div>
<div class="t" style="left:979.4px;top:264.15px;font-size:28.8px;color:#ececec;transform:scale(0.1966,0.25);">Pixels</div>
<svg style="left:0px;top:0px;" width="1080" height="720" viewBox="0 0 1080 720"><path d="M1014.5 277.95 L1016.4 279.55 L1018.3 277.95" stroke="#b0b0b0" stroke-width="0.9" fill="none"/></svg>
<div class="a" style="left:897px;top:294.6px;width:169px;height:1px;background:#474747;"></div>
<svg style="left:0px;top:0px;" width="1080" height="720" viewBox="0 0 1080 720"><path d="M899.9000000000001 303.29999999999995 L902.2 305.5 L904.5 303.29999999999995" stroke="#a8a8a8" stroke-width="0.9" fill="none"/></svg>
<div class="t b" style="left:909.6px;top:289.8px;font-size:30.4px;color:#f0f0f0;transform:scale(0.2077,0.25);">Guides</div>
<div class="a" style="left:903px;top:317px;width:14.8px;height:16.4px;background:#363636;"></div>
<div class="a" style="left:944px;top:317px;width:14.8px;height:16.4px;background:#363636;"></div>
<svg style="left:0px;top:0px;" width="1080" height="720" viewBox="0 0 1080 720"><path d="M908.4 319.4 v11.6 M911 319.4 v11.6 M905.4 322.6 h10.4 M905.4 328 h10.4" stroke="#e4e4e4" stroke-width="0.9" fill="none"/><path d="M928.6 319.6 v11.2 M931.4 319.6 v11.2 M926 323 h8.6" stroke="#dcdcdc" stroke-width="0.9" fill="none"/><rect x="932.6" y="327.4" width="4.2" height="3.6" fill="#e4e4e4"/><path d="M933.6 327.4 v-1 a1.1 1.1 0 0 1 2.2 0 v1" stroke="#e4e4e4" stroke-width="0.7" fill="none"/><path d="M949 319.6 v11.4 M947 323.2 h9.6 M954.4 321 v5" stroke="#e4e4e4" stroke-width="0.9" fill="none"/><path d="M949.6 323.2 l2 -1.6 v3.2z" fill="#e4e4e4"/><rect x="953.4" y="326.6" width="2.6" height="3.8" fill="#e4e4e4"/></svg>
<div class="a" style="left:975.4px;top:320px;width:45.6px;height:13px;background:#424242;"></div>
<svg style="left:0px;top:0px;" width="1080" height="720" viewBox="0 0 1080 720"><path d="M1014.5 326.0 L1016.4 327.6 L1018.3 326.0" stroke="#b0b0b0" stroke-width="0.9" fill="none"/></svg>
<div class="a" style="left:979px;top:326.5px;width:27px;height:1.3px;background:#dedede;"></div>
<div class="a" style="left:897px;top:341.4px;width:169px;height:1px;background:#474747;"></div>
<svg style="left:0px;top:0px;" width="1080" height="720" viewBox="0 0 1080 720"><path d="M899.9000000000001 350.9 L902.2 353.1 L904.5 350.9" stroke="#a8a8a8" stroke-width="0.9" fill="none"/></svg>
<div class="t b" style="left:909.6px;top:337.4px;font-size:30.4px;color:#f0f0f0;transform:scale(0.2160,0.25);">Quick Actions</div>
<div class="a" style="left:1066.2px;top:94px;width:7.6px;height:273px;background:#4d4d4d;"></div>
<div class="a" style="left:1066.6px;top:104.8px;width:6.8px;height:222px;background:#6b6b6b;"></div>
<svg style="left:0px;top:0px;" width="1080" height="720" viewBox="0 0 1080 720"><path d="M1068.2 99.6 l1.8 -1.8 l1.8 1.8" stroke="#8c8c8c" stroke-width="0.8" fill="none"/><path d="M1068.2 360 l1.8 1.8 l1.8 -1.8" stroke="#8c8c8c" stroke-width="0.8" fill="none"/></svg>
<div class="a" style="left:896px;top:384.7px;width:179px;height:3px;background:#3e3e3e;"></div>
<div class="a" style="left:896px;top:387.7px;width:179px;height:19.1px;background:#424242;"></div>
<div class="a" style="left:896px;top:387.7px;width:29.4px;height:19.2px;background:#535353;"></div>
<div class="t b" style="left:901.8px;top:380.8px;font-size:30.4px;color:#f4f4f4;transform:scale(0.1887,0.25);">Layers</div>
<svg style="left:0px;top:0px;" width="1080" height="720" viewBox="0 0 1080 720"><rect x="1065.8" y="394.4" width="6" height="0.95" fill="#bdbdbd"/><rect x="1065.8" y="396.6" width="6" height="0.95" fill="#bdbdbd"/><rect x="1065.8" y="398.8" width="6" height="0.95" fill="#bdbdbd"/></svg>
<div class="a" style="left:896px;top:406.8px;width:179px;height:313.2px;background:#535353;"></div>
<div class="a" style="left:896px;top:387.7px;width:0.8px;height:333px;background:#484848;"></div>
<div class="a" style="left:899.7px;top:413.6px;width:52px;height:12.2px;background:#424242;"></div>
<svg style="left:0px;top:0px;" width="1080" height="720" viewBox="0 0 1080 720"><circle cx="904.6" cy="419" r="1.9" fill="none" stroke="#e6e6e6" stroke-width="1"/><path d="M906 420.6 l1.8 2" stroke="#e6e6e6" stroke-width="1.1"/><path d="M945.9 419.4 L947.8 421.0 L949.6999999999999 419.4" stroke="#b0b0b0" stroke-width="0.9" fill="none"/></svg>
<div class="t b" style="left:912px;top:405.4px;font-size:28.8px;color:#ececec;transform:scale(0.1938,0.25);">Kind</div>
<svg style="left:0px;top:0px;" width="1080" height="720" viewBox="0 0 1080 720"><rect x="960.2" y="415.6" width="8.2" height="7.4" rx="0.8" fill="none" stroke="#dedede" stroke-width="0.9"/><path d="M961.4 421.8 l2 -2.6 l1.4 1.6 l1 -1 l1.6 2z" fill="#dedede"/><circle cx="979.6" cy="419.6" r="3.6" fill="none" stroke="#dedede" stroke-width="0.9"/><path d="M977 422.1 A3.6 3.6 0 0 1 982.1 417 Z" fill="#dedede"/><rect x="1006.2" y="416.2" width="6.4" height="6.8" fill="none" stroke="#dedede" stroke-width="0.9"/><rect x="1005.2" y="415.2" width="2.2" height="2.2" fill="#dedede"/><rect x="1011.4" y="415.2" width="2.2" height="2.2" fill="#dedede"/><rect x="1005.2" y="421.8" width="2.2" height="2.2" fill="#dedede"/><rect x="1011.4" y="421.8" width="2.2" height="2.2" fill="#dedede"/><path d="M1021.4 415.4 h3.8 l2.4 2.4 v6 h-6.2z" fill="none" stroke="#dedede" stroke-width="0.9"/><rect x="1022.6" y="419.6" width="3.6" height="3.6" fill="#dedede"/><rect x="1036.6" y="415" width="3.2" height="8.6" rx="1.6" fill="#3c3c3c"/><circle cx="1038.2" cy="415.8" r="2.2" fill="#f2f2f2"/></svg>
<div class="t b n" style="left:990.2px;top:414.2px;font-size:11px;color:#dedede;font-family:'Liberation Serif',serif;transform:scaleX(.9)">T</div>
<div class="a" style="left:897px;top:429px;width:178px;height:0.9px;background:#484848;"></div>
<div class="a" style="left:899.8px;top:434px;width:76.4px;height:10.8px;background:#4c4c4c;"></div>
<div class="t" style="left:904px;top:425.6px;font-size:28px;color:#6e6e6e;transform:scale(0.1995,0.25);">Normal</div>
<svg style="left:0px;top:0px;" width="1080" height="720" viewBox="0 0 1080 720"><path d="M969.8000000000001 439.05 L971.6 440.55 L973.4 439.05" stroke="#666" stroke-width="0.8" fill="none"/></svg>
<div class="t" style="left:983px;top:425.6px;font-size:28px;color:#747474;transform:scale(0.2191,0.25);">Opacity:</div>
<div class="a" style="left:1010px;top:434.6px;width:20px;height:10px;background:#474747;"></div>
<div class="t" style="left:1012.6px;top:426.2px;font-size:27.2px;color:#686868;transform:scale(0.2070,0.25);">100%</div>
<div class="a" style="left:1032.6px;top:434.6px;width:7.6px;height:10px;background:#4e4e4e;"></div>
<svg style="left:0px;top:0px;" width="1080" height="720" viewBox="0 0 1080 720"><path d="M1034.8000000000002 439.3 L1036.4 440.7 L1038.0 439.3" stroke="#646464" stroke-width="0.8" fill="none"/></svg>
<div class="a" style="left:897px;top:448px;width:178px;height:0.9px;background:#484848;"></div>
<div class="t" style="left:899.8px;top:445.2px;font-size:28px;color:#747474;transform:scale(0.1973,0.25);">Lock:</div>
<svg style="left:0px;top:0px;" width="1080" height="720" viewBox="0 0 1080 720"><rect x="920.4" y="455.4" width="7" height="7.4" fill="none" stroke="#8a8a8a" stroke-width="0.7"/><rect x="920.40" y="455.40" width="2.33" height="2.47" fill="#8a8a8a"/><rect x="925.06" y="455.40" width="2.33" height="2.47" fill="#8a8a8a"/><rect x="922.73" y="457.87" width="2.33" height="2.47" fill="#8a8a8a"/><rect x="920.40" y="460.34" width="2.33" height="2.47" fill="#8a8a8a"/><rect x="925.06" y="460.34" width="2.33" height="2.47" fill="#8a8a8a"/><path d="M942.4 454.4 l0.9 0.8 l-4 5 l-1.2 -1z" fill="#8a8a8a"/><path d="M937.6 459.8 l1.2 1 q-0.8 2 -3 1.8 q0.8 -2.2 1.8 -2.8z" fill="#8a8a8a"/><path d="M948.5 459 H954.7 M951.6 455.9 V462.1" stroke="#8a8a8a" stroke-width="0.682" fill="none"/><path d="M947.9 459 l1.333 -1.333 v2.666z M955.3000000000001 459 l-1.333 -1.333 v2.666z M951.6 455.29999999999995 l-1.333 1.333 h2.666z M951.6 462.70000000000005 l-1.333 -1.333 h2.666z" fill="#8a8a8a"/><path d="M962.4 456.2 h5.6 l1.6 1.6 v4.8 h-7.2z M961 458.8 h2.6 M964.2 454.8 v2.6" fill="none" stroke="#8a8a8a" stroke-width="0.8"/><rect x="976.2" y="458.2" width="6" height="4.8" rx="0.6" fill="#8a8a8a"/><path d="M977.6 458.2 v-1.4 a1.6 1.6 0 0 1 3.2 0 v1.4" stroke="#8a8a8a" stroke-width="0.9" fill="none"/></svg>
<div class="t" style="left:997.4px;top:445.2px;font-size:28px;color:#747474;transform:scale(0.1883,0.25);">Fill:</div>
<div class="a" style="left:1010px;top:454.2px;width:20px;height:10px;background:#474747;"></div>
<div class="t" style="left:1012.6px;top:445.8px;font-size:27.2px;color:#686868;transform:scale(0.2070,0.25);">100%</div>
<div class="a" style="left:1032.6px;top:454.2px;width:7.6px;height:10px;background:#4e4e4e;"></div>
<svg style="left:0px;top:0px;" width="1080" height="720" viewBox="0 0 1080 720"><path d="M1034.8000000000002 458.90000000000003 L1036.4 460.3 L1038.0 458.90000000000003" stroke="#646464" stroke-width="0.8" fill="none"/></svg>
<div class="a" style="left:897px;top:468.6px;width:168.5px;height:0.9px;background:#4c4c4c;"></div>
<div class="a" style="left:897px;top:486px;width:168.5px;height:0.9px;background:#4c4c4c;"></div>
<div class="a" style="left:897px;top:514.3px;width:168.5px;height:0.9px;background:#4c4c4c;"></div>
<div class="a" style="left:897px;top:543.7px;width:168.5px;height:0.9px;background:#4c4c4c;"></div>
<div class="a" style="left:897px;top:571.6px;width:168.5px;height:0.9px;background:#4c4c4c;"></div>
<div class="a" style="left:897px;top:600.2px;width:168.5px;height:0.9px;background:#4c4c4c;"></div>
<div class="a" style="left:897px;top:628.8px;width:168.5px;height:0.9px;background:#4c4c4c;"></div>
<div class="a" style="left:897px;top:657.3px;width:168.5px;height:0.9px;background:#4c4c4c;"></div>
<div class="a" style="left:897px;top:686px;width:168.5px;height:0.9px;background:#4c4c4c;"></div>
<div class="a" style="left:913px;top:468.6px;width:0.9px;height:236.4px;background:#4d4d4d;"></div>
<svg style="left:0px;top:0px;" width="1080" height="720" viewBox="0 0 1080 720"><path d="M901.3 478.4 q4.2 -5.6 8.4 0 q-4.2 5.6 -8.4 0z" fill="none" stroke="#a4a4a4" stroke-width="1.0"/><circle cx="905.5" cy="478.4" r="1.5" fill="#a4a4a4"/><path d="M901.3 502 q4.2 -5.6 8.4 0 q-4.2 5.6 -8.4 0z" fill="none" stroke="#a4a4a4" stroke-width="1.0"/><circle cx="905.5" cy="502" r="1.5" fill="#a4a4a4"/><path d="M901.3 530.2 q4.2 -5.6 8.4 0 q-4.2 5.6 -8.4 0z" fill="none" stroke="#a4a4a4" stroke-width="1.0"/><circle cx="905.5" cy="530.2" r="1.5" fill="#a4a4a4"/><path d="M901.3 558.6 q4.2 -5.6 8.4 0 q-4.2 5.6 -8.4 0z" fill="none" stroke="#a4a4a4" stroke-width="1.0"/><circle cx="905.5" cy="558.6" r="1.5" fill="#a4a4a4"/><path d="M901.3 615.2 q4.2 -5.6 8.4 0 q-4.2 5.6 -8.4 0z" fill="none" stroke="#a4a4a4" stroke-width="1.0"/><circle cx="905.5" cy="615.2" r="1.5" fill="#a4a4a4"/><path d="M901.3 643.6 q4.2 -5.6 8.4 0 q-4.2 5.6 -8.4 0z" fill="none" stroke="#a4a4a4" stroke-width="1.0"/><circle cx="905.5" cy="643.6" r="1.5" fill="#a4a4a4"/><path d="M901.3 672 q4.2 -5.6 8.4 0 q-4.2 5.6 -8.4 0z" fill="none" stroke="#a4a4a4" stroke-width="1.0"/><circle cx="905.5" cy="672" r="1.5" fill="#a4a4a4"/><path d="M901.3 700 q4.2 -5.6 8.4 0 q-4.2 5.6 -8.4 0z" fill="none" stroke="#a4a4a4" stroke-width="1.0"/><circle cx="905.5" cy="700" r="1.5" fill="#a4a4a4"/><path d="M901 591.6 h6.4 v-7.4z" fill="none" stroke="#5c5c5c" stroke-width="0.7"/><path d="M927.0 477.05 L929.3 479.34999999999997 L931.5999999999999 477.05" stroke="#c0c0c0" stroke-width="0.9" fill="none"/><path d="M935.1 474.3 h3 l0.9 1.1 h4.9 v6.3 h-8.8z" fill="#e6e6e6"/><path d="M935.1 476.8 h8.8" stroke="#535353" stroke-width="0.6"/></svg>
<div class="t" style="left:951px;top:464.2px;font-size:28.8px;color:#ececec;transform:scale(0.2156,0.25);">edite text</div>
<div class="t n" style="left:942.6px;top:494.9px;font-size:15px;color:#e4e4e4;font-family:'Liberation Serif',serif;transform:scaleX(1.02)">T</div>
<div class="t" style="left:962.8px;top:486.9px;font-size:28.8px;color:#ececec;transform:scale(0.2124,0.25);">Layer 2</div>
<div class="a" style="left:937.7px;top:518.7px;width:15.6px;height:21.4px;background-color:#fff;background-image:conic-gradient(#d4d4d4 25%,#fff 0 50%,#d4d4d4 0 75%,#fff 0);background-size:3.2px 3.2px;border:0.6px solid #e8e8e8"></div>
<div class="a" style="left:939.4px;top:520.2px;width:1.6px;height:3px;background:#7a2a2a;"></div>
<div class="t" style="left:959px;top:515.2px;font-size:28.8px;color:#ececec;transform:scale(0.2124,0.25);">Layer 3</div>
<div class="t n" style="left:942.6px;top:551.5px;font-size:15px;color:#e4e4e4;font-family:'Liberation Serif',serif;transform:scaleX(1.02)">T</div>
<div class="t" style="left:963.2px;top:544.6px;font-size:28px;color:#ececec;transform:scale(0.2349,0.25);">cilla0000000...&lt;&lt;&lt;&lt;&lt;&lt;&lt;&lt;0 d</div>
<div class="t n" style="left:942.6px;top:579.9px;font-size:15px;color:#e4e4e4;font-family:'Liberation Serif',serif;transform:scaleX(1.02)">T</div>
<div class="t" style="left:963.2px;top:573px;font-size:28px;color:#ececec;transform:scale(0.1970,0.25);">1aa</div>
<div class="t n" style="left:942.6px;top:608.1px;font-size:15px;color:#e4e4e4;font-family:'Liberation Serif',serif;transform:scaleX(1.02)">T</div>
<div class="t" style="left:963.2px;top:601.2px;font-size:28px;color:#ececec;transform:scale(0.2012,0.25);">169</div>
<div class="t n" style="left:942.6px;top:636.5px;font-size:15px;color:#e4e4e4;font-family:'Liberation Serif',serif;transform:scaleX(1.02)">T</div>
<div class="t" style="left:963.2px;top:629.6px;font-size:28px;color:#ececec;transform:scale(0.2315,0.25);">m</div>
<div class="t n" style="left:942.6px;top:664.9px;font-size:15px;color:#e4e4e4;font-family:'Liberation Serif',serif;transform:scaleX(1.02)">T</div>
<div class="t" style="left:963.2px;top:658px;font-size:28px;color:#ececec;transform:scale(0.2055,0.25);">129 1 a</div>
<div class="t n" style="left:942.6px;top:692.9px;font-size:15px;color:#e4e4e4;font-family:'Liberation Serif',serif;transform:scaleX(1.02)">T</div>
<div class="t" style="left:963.2px;top:686px;font-size:28px;color:#ececec;transform:scale(0.2055,0.25);">01.01.1990</div>
<div class="a" style="left:1066.2px;top:469px;width:7.6px;height:236px;background:#4e4e4e;"></div>
<div class="a" style="left:1066.6px;top:490px;width:6.8px;height:62px;background:#6b6b6b;"></div>
<svg style="left:0px;top:0px;" width="1080" height="720" viewBox="0 0 1080 720"><path d="M1068.2 478 l1.8 -1.8 l1.8 1.8" stroke="#8c8c8c" stroke-width="0.8" fill="none"/><path d="M1068.2 697.6 l1.8 1.8 l1.8 -1.8" stroke="#8c8c8c" stroke-width="0.8" fill="none"/></svg>
<div class="a" style="left:896.8px;top:705px;width:178.2px;height:15px;background:#535353;"></div>
<div class="a" style="left:896.8px;top:705px;width:178.2px;height:0.9px;background:#464646;"></div>
<svg style="left:0px;top:0px;" width="1080" height="720" viewBox="0 0 1080 720"><rect x="949" y="711.4" width="4.6" height="3.6" rx="1.8" fill="none" stroke="#777" stroke-width="0.9"/><rect x="952.6" y="711.4" width="4.6" height="3.6" rx="1.8" fill="none" stroke="#777" stroke-width="0.9"/><rect x="982.6" y="709.8" width="8.6" height="7" fill="none" stroke="#dcdcdc" stroke-width="1.1"/><circle cx="986.9" cy="713.3" r="1.9" fill="#dcdcdc"/><circle cx="1003.6" cy="713.4" r="3.8" fill="none" stroke="#dcdcdc" stroke-width="1"/><path d="M1000.9 716.1 A3.8 3.8 0 0 1 1006.3 710.7 Z" fill="#dcdcdc"/><path d="M1007 717.6 l1.8 0 l0 -1.8z" fill="#dcdcdc"/><path d="M1016 709.6 h3 l0.9 1.1 h4.7 v6.6 h-8.6z" fill="#dcdcdc"/><rect x="1034" y="709.4" width="7.2" height="7.8" rx="0.8" fill="none" stroke="#dcdcdc" stroke-width="1"/><path d="M1037.6 711.4 v3.8 M1035.7 713.3 h3.8" stroke="#dcdcdc" stroke-width="0.9"/><path d="M1050.4 710.6 h6.8 M1052.4 710.6 v-1 h2.8 v1 M1051.2 711.4 l0.5 6 h4.2 l0.5 -6" fill="none" stroke="#777" stroke-width="0.9"/></svg>
<div class="t i n" style="left:966.6px;top:708.6px;font-size:9px;color:#dcdcdc;font-family:'Liberation Serif',serif;transform:scaleX(.9)">fx</div>
</div></body></html>
